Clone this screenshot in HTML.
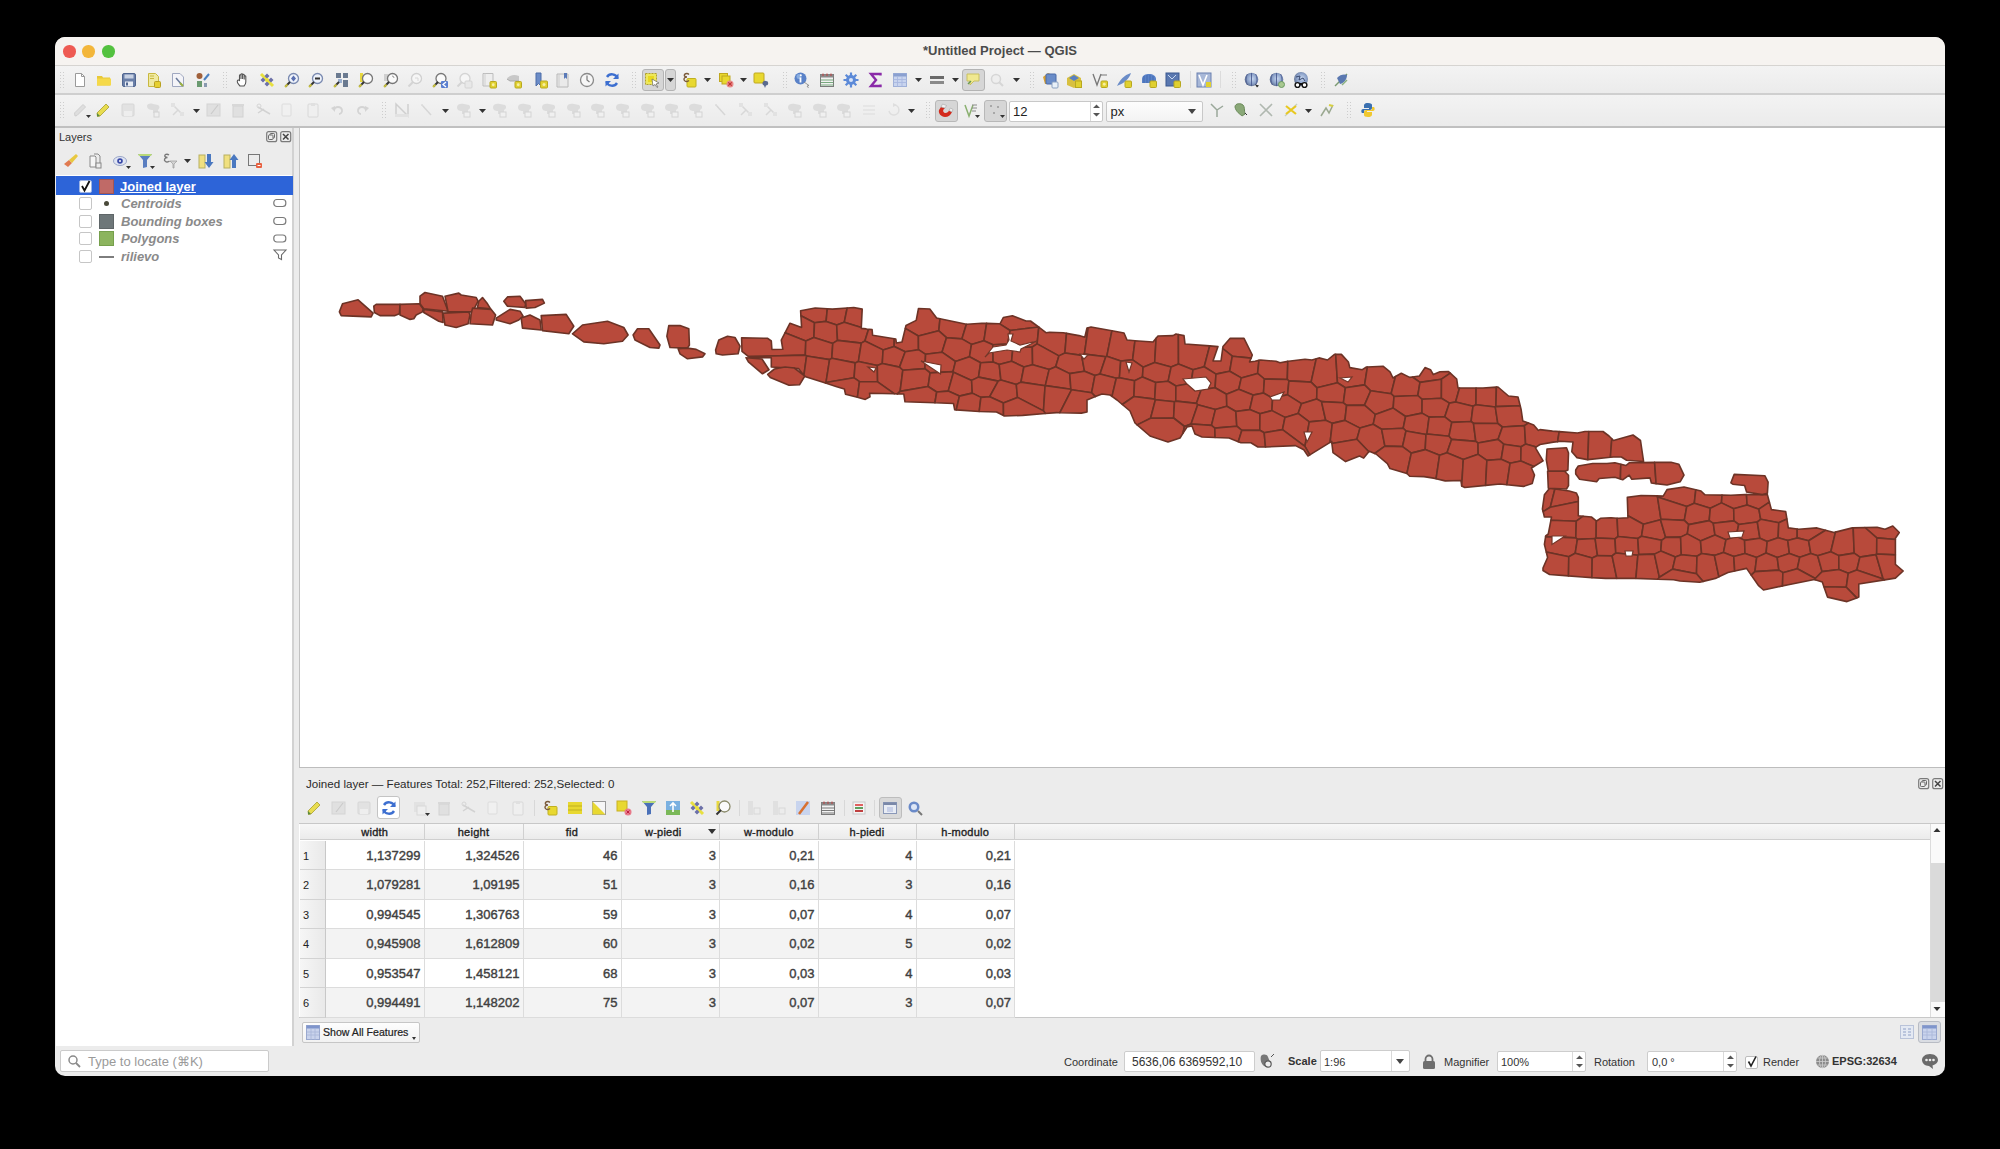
<!DOCTYPE html>
<html><head><meta charset="utf-8">
<style>
*{box-sizing:border-box;margin:0;padding:0}
html,body{width:2000px;height:1149px;background:#000;overflow:hidden;font-family:"Liberation Sans",sans-serif;color:#333}
.a{position:absolute}
.t{position:absolute;white-space:nowrap;font-size:11px;line-height:13px;color:#333}
#win{position:absolute;left:55px;top:37px;width:1890px;height:1039px;border-radius:10px;overflow:hidden;background:#ececec}
.tl{position:absolute;top:45px;width:12.5px;height:12.5px;border-radius:50%}
.sep{position:absolute;width:1890px;left:55px;height:1px}
.cell{position:absolute;height:29.5px;text-align:right;font-size:13px;line-height:29px;color:#404040;padding-right:3px;-webkit-text-stroke:0.4px #404040;border-right:1px solid #dcdcdc;border-bottom:1px solid #dcdcdc}
.hd{position:absolute;top:824px;height:16px;text-align:center;font-size:11px;line-height:16px;color:#222;-webkit-text-stroke:0.35px #222;letter-spacing:0.25px;border-right:1px solid #d0d0d0}
.rn{position:absolute;left:300px;width:26px;height:29.5px;font-size:11px;line-height:30px;padding-left:3px;color:#222;background:linear-gradient(90deg,#f6f6f6,#e9e9e9);border-bottom:1px solid #d2d2d2;border-right:1px solid #c8c8c8}
.box{position:absolute;background:#fff;border:1px solid #c9c9c9;border-radius:2px}
.press{position:absolute;background:#dcdcdc;border:1px solid #bdbdbd;border-radius:3px}
.arr{position:absolute;width:0;height:0;border-left:4px solid transparent;border-right:4px solid transparent;border-top:5px solid #333}
.hdl{position:absolute;width:6px;background-image:radial-gradient(#cdcdcd 0.7px,transparent 0.9px);background-size:3px 3px}
svg{position:absolute;overflow:visible}
</style></head>
<body>
<div id="all" style="position:absolute;left:0;top:0;width:2000px;height:1149px">
<div id="win"></div>
<!-- title bar -->
<div class="a" style="left:55px;top:37px;width:1890px;height:28px;background:#f6f3f0;border-radius:10px 10px 0 0"></div>
<div class="sep" style="top:65px;background:#d6d4d1"></div>
<div class="tl" style="left:63px;background:#ee5a52"></div>
<div class="tl" style="left:82px;background:#f3b63a"></div>
<div class="tl" style="left:102px;background:#53c13f"></div>
<div class="t" style="left:55px;width:1890px;top:43px;text-align:center;font-size:13px;line-height:15px;font-weight:bold;color:#4b4b4b">*Untitled Project — QGIS</div>
<!-- toolbars -->
<div class="a" style="left:55px;top:66px;width:1890px;height:28px;background:linear-gradient(#f3f3f3,#ebebeb)"></div>
<div class="sep" style="top:93px;height:2px;background:#cfcfcf"></div>
<div class="a" style="left:55px;top:95px;width:1890px;height:31px;background:linear-gradient(#f3f3f3,#ebebeb)"></div>
<div class="sep" style="top:126px;height:2px;background:#c0c0c0"></div>
<!-- layers dock -->
<div class="t" style="left:59px;top:131px;font-size:11px">Layers</div>
<div class="a" style="left:56px;top:175px;width:237px;height:871px;background:#fff"></div>
<div class="a" style="left:292px;top:128px;width:2px;height:918px;background:#d2d2d2"></div>
<div class="a" style="left:56px;top:176px;width:236.5px;height:18.5px;background:#2d64d8"></div>
<!-- map canvas -->
<div class="a" style="left:299px;top:128px;width:1646px;height:640px;background:#fff;border-left:1px solid #c2c2c2;border-bottom:1px solid #bdbdbd"></div>
<svg class="a" style="left:0;top:0" width="2000" height="1149" viewBox="0 0 2000 1149"><g fill="#b84a3b" stroke="#6c3326" stroke-width="1.6" stroke-linejoin="round"><path d="M1010.1 330.5 L1038.6 327.0 L1030.5 321.0 L1026.0 321.0 L1012.4 315.8 L1003.3 317.5 L1000.0 323.8 L999.7 323.8Z"/><path d="M1232.3 356.2 L1251.1 358.1 L1252.3 355.0 L1244.0 338.4 L1230.0 338.4 L1223.0 346.6 L1222.7 348.5Z"/><path d="M1420.0 382.4 L1441.5 379.2 L1450.3 373.2 L1448.5 371.5 L1440.0 371.8 L1433.3 374.6 L1430.5 369.7 L1425.0 367.6 L1419.4 376.0 L1412.5 377.0Z"/><path d="M814.5 322.7 L826.1 321.4 L827.3 308.8 L815.2 308.0 L800.6 310.7 L800.9 315.8Z"/><path d="M847.2 308.0 L832.4 309.1 L827.3 308.8 L826.1 321.4 L836.7 325.1 L844.3 322.2Z"/><path d="M844.3 322.2 L861.3 327.4 L862.2 309.1 L853.8 307.5 L847.2 308.0Z"/><path d="M940.0 318.7 L936.6 318.0 L929.8 309.0 L918.5 308.5 L916.2 320.4 L906.0 325.5 L905.3 328.4 L918.4 336.0 L938.8 330.8Z"/><path d="M961.9 338.9 L966.4 324.2 L940.0 318.7 L938.8 330.8 L946.5 337.7Z"/><path d="M986.6 323.4 L981.8 323.2 L967.0 324.3 L966.4 324.2 L961.9 338.9 L971.5 344.4 L983.9 340.8Z"/><path d="M1007.7 344.0 L1010.1 330.5 L999.7 323.8 L986.6 323.4 L983.9 340.8 L992.9 344.8Z"/><path d="M1010.1 330.5 L1007.7 344.0 L1012.9 347.9 L1032.3 347.0 L1037.1 343.9 L1038.8 327.2 L1038.6 327.0Z"/><path d="M1066.5 333.4 L1063.3 332.8 L1049.7 332.2 L1046.3 332.8 L1038.8 327.2 L1037.1 343.9 L1058.9 355.9 L1064.9 353.0Z"/><path d="M1064.9 353.0 L1081.6 355.4 L1084.4 354.1 L1088.2 327.7 L1087.0 328.0 L1084.8 337.3 L1079.0 335.6 L1066.5 333.4Z"/><path d="M1084.4 354.1 L1105.8 356.8 L1106.8 356.3 L1111.9 330.8 L1091.0 327.0 L1088.2 327.7Z"/><path d="M1106.8 356.3 L1120.7 361.1 L1132.6 359.8 L1135.0 340.7 L1127.0 340.0 L1124.0 333.0 L1111.9 330.8Z"/><path d="M1154.7 362.5 L1156.1 338.3 L1153.0 342.0 L1138.5 341.0 L1135.0 340.7 L1132.6 359.8 L1143.1 367.2Z"/><path d="M1154.7 362.5 L1171.1 367.1 L1178.5 364.1 L1178.4 334.5 L1176.0 334.0 L1173.0 335.6 L1158.0 336.0 L1156.1 338.3Z"/><path d="M1178.5 364.1 L1193.0 369.8 L1204.2 366.8 L1209.7 345.9 L1185.0 344.0 L1184.0 335.6 L1178.4 334.5Z"/><path d="M1222.7 348.5 L1221.0 361.0 L1213.0 361.0 L1218.0 346.6 L1209.7 345.9 L1204.2 366.8 L1216.0 374.1 L1229.7 371.3 L1232.3 356.2Z"/><path d="M1232.3 356.2 L1229.7 371.3 L1241.3 377.9 L1257.6 373.4 L1259.0 360.4 L1255.0 361.3 L1249.5 362.0 L1251.1 358.1Z"/><path d="M1264.4 379.0 L1287.3 379.5 L1287.8 361.4 L1280.0 362.7 L1276.0 361.3 L1260.6 360.0 L1259.0 360.4 L1257.6 373.4Z"/><path d="M1287.3 379.5 L1288.9 380.9 L1311.1 382.1 L1316.3 358.7 L1312.0 360.0 L1305.0 359.2 L1288.5 361.3 L1287.8 361.4Z"/><path d="M1311.1 382.1 L1317.0 387.8 L1337.5 382.8 L1335.7 354.4 L1334.5 354.4 L1327.5 360.0 L1319.0 357.9 L1316.3 358.7Z"/><path d="M1364.6 384.9 L1367.4 367.0 L1366.5 367.0 L1362.3 369.7 L1349.8 367.6 L1348.4 362.0 L1341.4 354.4 L1335.7 354.4 L1337.5 382.8 L1345.4 387.7Z"/><path d="M1391.1 393.7 L1395.5 376.5 L1393.0 378.0 L1390.0 371.8 L1383.0 366.2 L1367.4 367.0 L1364.6 384.9 L1370.7 390.8Z"/><path d="M1420.0 382.4 L1412.5 377.0 L1409.7 377.4 L1401.3 373.2 L1395.5 376.5 L1391.1 393.7 L1394.0 396.5 L1417.8 395.5Z"/><path d="M1441.4 398.3 L1441.5 379.2 L1420.0 382.4 L1417.8 395.5 L1422.1 399.3Z"/><path d="M1459.5 388.0 L1458.0 388.0 L1456.7 379.0 L1450.3 373.2 L1441.5 379.2 L1441.4 398.3 L1449.4 403.1 L1455.6 402.0Z"/><path d="M1455.6 402.0 L1473.0 406.3 L1476.0 404.8 L1476.1 388.0 L1459.5 388.0Z"/><path d="M1476.0 404.8 L1495.3 407.0 L1495.9 406.6 L1496.4 387.1 L1483.0 388.0 L1476.1 388.0Z"/><path d="M1495.9 406.6 L1520.2 405.8 L1518.0 397.0 L1508.5 396.0 L1498.0 387.0 L1496.4 387.1Z"/><path d="M814.5 322.7 L800.9 315.8 L801.6 327.4 L790.0 323.2 L785.0 332.8 L805.8 340.9 L813.9 337.6Z"/><path d="M826.1 321.4 L814.5 322.7 L813.9 337.6 L832.8 343.4 L837.5 340.4 L836.7 325.1Z"/><path d="M868.5 329.6 L866.1 328.9 L861.2 328.4 L861.3 327.4 L844.3 322.2 L836.7 325.1 L837.5 340.4 L861.3 343.1 L864.9 341.0Z"/><path d="M868.5 329.6 L864.9 341.0 L883.1 349.9 L894.2 346.5 L894.2 338.7 L872.6 335.2 L872.1 329.5 L869.2 329.2Z"/><path d="M918.4 336.0 L905.3 328.4 L902.0 342.0 L896.4 343.0 L895.8 339.0 L894.2 338.7 L894.2 346.5 L905.2 351.8 L918.5 349.7Z"/><path d="M942.0 352.2 L946.5 337.7 L938.8 330.8 L918.4 336.0 L918.5 349.7 L925.6 354.3Z"/><path d="M961.9 338.9 L946.5 337.7 L942.0 352.2 L955.5 361.5 L969.5 356.7 L971.5 344.4Z"/><path d="M983.9 340.8 L971.5 344.4 L969.5 356.7 L980.7 362.7 L993.1 362.0 L992.9 344.8Z"/><path d="M993.1 362.0 L999.2 364.5 L1011.6 361.2 L1012.9 347.9 L1007.7 344.0 L992.9 344.8Z"/><path d="M1023.9 367.0 L1032.6 364.8 L1032.3 347.0 L1012.9 347.9 L1011.6 361.2Z"/><path d="M1037.1 343.9 L1032.3 347.0 L1032.6 364.8 L1049.2 369.4 L1055.7 366.8 L1058.9 355.9Z"/><path d="M1081.6 355.4 L1064.9 353.0 L1058.9 355.9 L1055.7 366.8 L1069.7 373.6 L1084.5 371.2Z"/><path d="M1105.8 356.8 L1084.4 354.1 L1081.6 355.4 L1084.5 371.2 L1094.9 375.6 L1100.0 374.0Z"/><path d="M1116.3 378.3 L1119.4 377.7 L1120.7 361.1 L1106.8 356.3 L1105.8 356.8 L1100.0 374.0Z"/><path d="M1134.6 380.8 L1142.5 376.9 L1143.1 367.2 L1132.6 359.8 L1120.7 361.1 L1119.4 377.7Z"/><path d="M1155.7 382.5 L1168.1 381.3 L1171.1 367.1 L1154.7 362.5 L1143.1 367.2 L1142.5 376.9Z"/><path d="M1168.1 381.3 L1175.9 386.0 L1191.2 383.2 L1193.0 369.8 L1178.5 364.1 L1171.1 367.1Z"/><path d="M1191.2 383.2 L1201.2 389.7 L1215.1 387.7 L1216.0 374.1 L1204.2 366.8 L1193.0 369.8Z"/><path d="M1216.0 374.1 L1215.1 387.7 L1226.5 394.3 L1238.8 389.2 L1241.3 377.9 L1229.7 371.3Z"/><path d="M1241.3 377.9 L1238.8 389.2 L1253.0 395.1 L1263.5 393.0 L1264.4 379.0 L1257.6 373.4Z"/><path d="M1287.6 394.8 L1288.9 380.9 L1287.3 379.5 L1264.4 379.0 L1263.5 393.0 L1272.6 398.2Z"/><path d="M1317.0 387.8 L1311.1 382.1 L1288.9 380.9 L1287.6 394.8 L1301.5 403.7 L1316.7 399.0Z"/><path d="M1343.4 402.8 L1345.4 387.7 L1337.5 382.8 L1317.0 387.8 L1316.7 399.0 L1321.5 401.6Z"/><path d="M1343.4 402.8 L1346.6 405.4 L1364.5 405.1 L1370.7 390.8 L1364.6 384.9 L1345.4 387.7Z"/><path d="M1393.2 408.1 L1394.0 396.5 L1391.1 393.7 L1370.7 390.8 L1364.5 405.1 L1375.3 414.5Z"/><path d="M1417.8 395.5 L1394.0 396.5 L1393.2 408.1 L1405.6 416.5 L1422.0 413.1 L1422.1 399.3Z"/><path d="M1449.4 403.1 L1441.4 398.3 L1422.1 399.3 L1422.0 413.1 L1429.1 417.1 L1444.8 416.8Z"/><path d="M1471.1 421.5 L1473.0 406.3 L1455.6 402.0 L1449.4 403.1 L1444.8 416.8 L1451.8 422.4Z"/><path d="M1473.5 423.4 L1497.8 423.5 L1495.3 407.0 L1476.0 404.8 L1473.0 406.3 L1471.1 421.5Z"/><path d="M1497.8 423.5 L1502.4 427.0 L1524.5 425.6 L1528.4 423.0 L1522.8 421.0 L1521.2 410.0 L1520.2 405.8 L1495.9 406.6 L1495.3 407.0Z"/><path d="M805.3 355.1 L805.8 340.9 L785.0 332.8 L781.3 340.0 L782.8 349.3 L771.9 349.5 L771.3 341.0 L767.7 338.3 L741.6 337.8 L742.0 351.4 L748.6 356.6Z"/><path d="M829.6 359.6 L831.8 358.3 L832.8 343.4 L813.9 337.6 L805.8 340.9 L805.3 355.1 L806.6 356.0Z"/><path d="M837.5 340.4 L832.8 343.4 L831.8 358.3 L855.2 362.9 L858.4 361.5 L861.3 343.1Z"/><path d="M861.3 343.1 L858.4 361.5 L877.3 365.5 L882.3 363.5 L883.1 349.9 L864.9 341.0Z"/><path d="M905.2 351.8 L894.2 346.5 L883.1 349.9 L882.3 363.5 L899.5 367.1Z"/><path d="M918.5 349.7 L905.2 351.8 L899.5 367.1 L902.8 370.3 L924.9 368.6 L925.6 354.3Z"/><path d="M924.9 368.6 L930.1 372.9 L953.0 371.6 L955.5 361.5 L942.0 352.2 L925.6 354.3Z"/><path d="M955.5 361.5 L953.0 371.6 L953.5 372.2 L971.6 380.4 L978.5 377.1 L980.7 362.7 L969.5 356.7Z"/><path d="M980.7 362.7 L978.5 377.1 L998.2 381.1 L1000.9 380.1 L999.2 364.5 L993.1 362.0Z"/><path d="M1023.9 367.0 L1011.6 361.2 L999.2 364.5 L1000.9 380.1 L1016.3 384.5 L1020.9 382.1Z"/><path d="M1045.1 385.8 L1045.3 385.6 L1049.2 369.4 L1032.6 364.8 L1023.9 367.0 L1020.9 382.1Z"/><path d="M1055.7 366.8 L1049.2 369.4 L1045.3 385.6 L1070.9 389.2 L1069.7 373.6Z"/><path d="M1084.5 371.2 L1069.7 373.6 L1070.9 389.2 L1071.5 389.8 L1091.6 392.8 L1094.9 375.6Z"/><path d="M1116.3 378.3 L1100.0 374.0 L1094.9 375.6 L1091.6 392.8 L1095.4 396.6 L1102.0 394.0 L1110.0 395.0 L1112.0 396.4Z"/><path d="M1133.9 396.5 L1134.6 380.8 L1119.4 377.7 L1116.3 378.3 L1112.0 396.4 L1117.0 400.0 L1122.3 404.5Z"/><path d="M1133.9 396.5 L1154.7 399.1 L1155.7 382.5 L1142.5 376.9 L1134.6 380.8Z"/><path d="M1155.4 399.7 L1174.5 401.8 L1175.8 401.1 L1175.9 386.0 L1168.1 381.3 L1155.7 382.5 L1154.7 399.1Z"/><path d="M1175.8 401.1 L1196.4 403.4 L1201.2 389.7 L1191.2 383.2 L1175.9 386.0Z"/><path d="M1215.4 409.6 L1226.8 406.2 L1226.5 394.3 L1215.1 387.7 L1201.2 389.7 L1196.4 403.4 L1197.7 404.7Z"/><path d="M1226.8 406.2 L1235.9 411.5 L1249.7 409.6 L1253.0 395.1 L1238.8 389.2 L1226.5 394.3Z"/><path d="M1263.5 393.0 L1253.0 395.1 L1249.7 409.6 L1260.0 413.7 L1271.9 410.6 L1272.6 398.2Z"/><path d="M1271.9 410.6 L1285.0 417.4 L1298.1 413.4 L1301.5 403.7 L1287.6 394.8 L1272.6 398.2Z"/><path d="M1316.7 399.0 L1301.5 403.7 L1298.1 413.4 L1309.3 421.9 L1325.7 420.3 L1321.5 401.6Z"/><path d="M1325.7 420.3 L1332.3 423.4 L1344.9 420.4 L1346.6 405.4 L1343.4 402.8 L1321.5 401.6Z"/><path d="M1360.0 428.1 L1373.2 424.3 L1375.3 414.5 L1364.5 405.1 L1346.6 405.4 L1344.9 420.4Z"/><path d="M1381.6 429.2 L1403.2 428.2 L1405.6 416.5 L1393.2 408.1 L1375.3 414.5 L1373.2 424.3Z"/><path d="M1405.6 416.5 L1403.2 428.2 L1406.0 431.0 L1426.0 434.5 L1426.9 434.0 L1429.1 417.1 L1422.0 413.1Z"/><path d="M1444.8 416.8 L1429.1 417.1 L1426.9 434.0 L1449.0 436.2 L1451.8 422.4Z"/><path d="M1473.5 423.4 L1471.1 421.5 L1451.8 422.4 L1449.0 436.2 L1451.6 439.4 L1475.8 441.4Z"/><path d="M1498.0 439.4 L1502.4 427.0 L1497.8 423.5 L1473.5 423.4 L1475.8 441.4 L1478.0 443.0Z"/><path d="M1521.1 446.8 L1525.6 444.1 L1524.5 425.6 L1502.4 427.0 L1498.0 439.4 L1503.7 444.2Z"/><path d="M1524.5 425.6 L1525.6 444.1 L1536.3 446.9 L1540.0 444.5 L1553.3 442.1 L1557.6 441.6 L1559.2 431.6 L1552.5 431.1 L1540.0 429.6 L1538.4 430.4 L1533.7 424.9 L1528.4 423.0Z"/><path d="M1557.6 441.6 L1560.0 441.3 L1573.0 442.0 L1571.8 451.7 L1577.0 457.6 L1587.4 459.6 L1587.8 459.6 L1588.8 431.5 L1585.0 431.5 L1577.5 433.0 L1559.2 431.6Z"/><path d="M1587.8 459.6 L1610.4 457.3 L1611.8 438.8 L1609.0 436.0 L1603.0 431.5 L1588.8 431.5Z"/><path d="M1610.4 457.3 L1613.5 457.0 L1621.4 457.0 L1626.6 460.2 L1643.6 461.5 L1640.5 440.5 L1633.0 435.0 L1613.5 440.5 L1611.8 438.8Z"/><path d="M806.6 356.0 L805.3 355.1 L748.6 356.6 L750.0 357.7 L771.3 357.7 L771.3 367.0 L798.5 368.6 L803.9 375.4Z"/><path d="M803.9 375.4 L804.8 376.5 L825.5 383.1 L826.0 382.5 L829.6 359.6 L806.6 356.0Z"/><path d="M831.8 358.3 L829.6 359.6 L826.0 382.5 L854.1 377.8 L855.2 362.9Z"/><path d="M855.2 362.9 L854.1 377.8 L859.5 381.7 L877.6 381.8 L877.3 365.5 L858.4 361.5Z"/><path d="M900.1 391.4 L902.8 370.3 L899.5 367.1 L882.3 363.5 L877.3 365.5 L877.6 381.8 L894.5 393.8 L897.4 393.9Z"/><path d="M900.1 391.4 L928.1 386.5 L930.1 372.9 L924.9 368.6 L902.8 370.3Z"/><path d="M928.1 386.5 L936.7 392.0 L948.2 391.1 L953.5 372.2 L953.0 371.6 L930.1 372.9Z"/><path d="M948.2 391.1 L959.4 396.1 L972.3 393.1 L971.6 380.4 L953.5 372.2Z"/><path d="M971.6 380.4 L972.3 393.1 L980.9 397.4 L989.7 396.7 L998.2 381.1 L978.5 377.1Z"/><path d="M1000.9 380.1 L998.2 381.1 L989.7 396.7 L1003.4 403.0 L1017.5 397.4 L1016.3 384.5Z"/><path d="M1016.3 384.5 L1017.5 397.4 L1043.5 410.9 L1045.1 385.8 L1020.9 382.1Z"/><path d="M1071.5 389.8 L1070.9 389.2 L1045.3 385.6 L1045.1 385.8 L1043.5 410.9 L1045.3 413.5 L1056.5 412.6 L1059.9 412.7Z"/><path d="M1071.5 389.8 L1059.9 412.7 L1081.4 413.1 L1087.0 412.0 L1087.0 400.0 L1095.4 396.6 L1091.6 392.8Z"/><path d="M1122.3 404.5 L1130.0 411.0 L1135.0 423.0 L1137.2 424.9 L1150.6 418.2 L1155.4 399.7 L1154.7 399.1 L1133.9 396.5Z"/><path d="M1150.6 418.2 L1173.6 418.0 L1174.5 401.8 L1155.4 399.7Z"/><path d="M1173.6 418.0 L1184.5 426.5 L1191.1 424.0 L1197.7 404.7 L1196.4 403.4 L1175.8 401.1 L1174.5 401.8Z"/><path d="M1211.5 425.4 L1215.4 409.6 L1197.7 404.7 L1191.1 424.0Z"/><path d="M1211.5 425.4 L1214.8 428.1 L1236.8 426.2 L1235.9 411.5 L1226.8 406.2 L1215.4 409.6Z"/><path d="M1249.7 409.6 L1235.9 411.5 L1236.8 426.2 L1241.8 430.4 L1259.8 430.2 L1260.0 413.7Z"/><path d="M1260.0 413.7 L1259.8 430.2 L1264.2 432.7 L1282.5 429.6 L1285.0 417.4 L1271.9 410.6Z"/><path d="M1309.3 421.9 L1298.1 413.4 L1285.0 417.4 L1282.5 429.6 L1304.9 446.3Z"/><path d="M1332.3 423.4 L1325.7 420.3 L1309.3 421.9 L1304.9 446.3 L1309.8 454.9 L1330.1 442.4Z"/><path d="M1330.1 442.4 L1331.7 441.4 L1331.9 443.5 L1356.9 439.3 L1360.0 428.1 L1344.9 420.4 L1332.3 423.4Z"/><path d="M1384.9 446.1 L1381.6 429.2 L1373.2 424.3 L1360.0 428.1 L1356.9 439.3 L1368.8 451.8 L1369.3 451.2 L1374.7 453.5Z"/><path d="M1402.5 446.6 L1406.0 431.0 L1403.2 428.2 L1381.6 429.2 L1384.9 446.1Z"/><path d="M1406.0 431.0 L1402.5 446.6 L1411.3 453.1 L1425.2 449.6 L1426.0 434.5Z"/><path d="M1449.0 436.2 L1426.9 434.0 L1426.0 434.5 L1425.2 449.6 L1439.6 455.2 L1447.0 452.7 L1451.6 439.4Z"/><path d="M1475.8 441.4 L1451.6 439.4 L1447.0 452.7 L1463.3 459.5 L1478.2 454.3 L1478.0 443.0Z"/><path d="M1478.2 454.3 L1486.9 460.4 L1501.2 459.2 L1503.7 444.2 L1498.0 439.4 L1478.0 443.0Z"/><path d="M1510.1 463.2 L1520.8 461.0 L1521.1 446.8 L1503.7 444.2 L1501.2 459.2Z"/><path d="M1525.6 444.1 L1521.1 446.8 L1520.8 461.0 L1533.8 466.5 L1543.1 460.9 L1535.3 447.6 L1536.3 446.9Z"/><path d="M826.0 382.5 L825.5 383.1 L836.0 386.4 L844.4 389.0 L845.5 394.2 L857.4 397.3 L859.5 381.7 L854.1 377.8Z"/><path d="M857.4 397.3 L865.3 399.4 L870.0 396.8 L869.5 393.2 L894.5 393.8 L877.6 381.8 L859.5 381.7Z"/><path d="M936.7 392.0 L928.1 386.5 L900.1 391.4 L897.4 393.9 L903.8 394.0 L905.0 401.8 L934.9 402.8Z"/><path d="M959.4 396.1 L948.2 391.1 L936.7 392.0 L934.9 402.8 L953.5 403.5 L954.7 409.8 L956.3 409.9Z"/><path d="M980.9 397.4 L972.3 393.1 L959.4 396.1 L956.3 409.9 L979.2 411.5Z"/><path d="M980.9 397.4 L979.2 411.5 L979.6 411.5 L996.5 412.0 L1003.5 415.5 L1003.4 403.0 L989.7 396.7Z"/><path d="M1043.5 410.9 L1017.5 397.4 L1003.4 403.0 L1003.5 415.5 L1004.5 416.0 L1022.6 415.4 L1045.3 413.5Z"/><path d="M1184.5 426.5 L1173.6 418.0 L1150.6 418.2 L1137.2 424.9 L1150.0 436.0 L1168.0 442.0 L1180.0 438.0 L1182.9 433.4Z"/><path d="M1214.8 428.1 L1211.5 425.4 L1191.1 424.0 L1184.5 426.5 L1182.9 433.4 L1187.0 427.0 L1192.0 426.0 L1195.0 434.0 L1202.0 437.0 L1215.1 437.5Z"/><path d="M1214.8 428.1 L1215.1 437.5 L1229.0 438.0 L1238.3 441.7 L1241.8 430.4 L1236.8 426.2Z"/><path d="M1238.3 441.7 L1241.0 442.8 L1250.9 442.8 L1257.9 447.0 L1265.5 447.0 L1264.2 432.7 L1259.8 430.2 L1241.8 430.4Z"/><path d="M1282.5 429.6 L1264.2 432.7 L1265.5 447.0 L1266.2 447.0 L1295.5 445.6 L1303.8 449.8 L1308.0 456.0 L1309.8 454.9 L1304.9 446.3Z"/><path d="M1356.9 439.3 L1331.9 443.5 L1333.0 452.6 L1345.6 461.6 L1359.5 456.0 L1363.7 458.1 L1368.8 451.8Z"/><path d="M1411.3 453.1 L1402.5 446.6 L1384.9 446.1 L1374.7 453.5 L1376.0 454.0 L1387.4 463.7 L1390.0 468.6 L1406.9 473.5Z"/><path d="M1439.6 455.2 L1425.2 449.6 L1411.3 453.1 L1406.9 473.5 L1407.0 473.5 L1409.7 476.2 L1424.0 476.6 L1433.5 478.1 L1436.1 478.7Z"/><path d="M1463.3 459.5 L1447.0 452.7 L1439.6 455.2 L1436.1 478.7 L1445.2 480.9 L1460.9 480.5 L1461.7 486.0 L1461.7 486.0Z"/><path d="M1486.9 460.4 L1478.2 454.3 L1463.3 459.5 L1461.7 486.0 L1464.8 487.5 L1485.6 485.4Z"/><path d="M1510.1 463.2 L1501.2 459.2 L1486.9 460.4 L1485.6 485.4 L1500.0 484.0 L1506.9 484.7Z"/><path d="M1520.8 461.0 L1510.1 463.2 L1506.9 484.7 L1523.5 486.4 L1532.2 483.6 L1534.5 475.0 L1531.4 468.0 L1533.8 466.5Z"/><path d="M1550.3 507.3 L1554.9 489.0 L1549.6 488.3 L1544.4 494.8 L1542.4 509.0 L1543.1 511.6Z"/><path d="M1550.3 507.3 L1578.3 501.5 L1578.3 497.4 L1576.3 492.9 L1569.2 491.0 L1554.9 489.0Z"/><path d="M1657.5 497.0 L1686.8 506.4 L1694.3 503.2 L1695.8 489.8 L1684.0 487.0 L1667.0 489.6 L1663.2 496.1 L1656.6 495.9Z"/><path d="M1694.3 503.2 L1710.3 508.3 L1721.5 502.9 L1722.0 495.1 L1705.0 494.8 L1701.0 491.0 L1695.8 489.8Z"/><path d="M1721.5 502.9 L1733.7 508.8 L1747.1 504.9 L1746.5 494.6 L1745.2 494.6 L1730.9 495.2 L1722.0 495.1Z"/><path d="M1747.1 504.9 L1758.9 509.2 L1769.4 502.2 L1767.4 494.6 L1746.5 494.6Z"/><path d="M1550.3 507.3 L1543.1 511.6 L1544.4 517.0 L1551.5 517.0 L1550.9 520.3 L1576.3 521.2 L1583.2 516.2 L1578.3 515.7 L1578.3 501.5Z"/><path d="M1643.4 524.3 L1660.5 519.8 L1661.0 519.3 L1657.5 497.0 L1656.6 495.9 L1641.0 495.5 L1627.3 497.4 L1627.9 515.8Z"/><path d="M1661.0 519.3 L1684.3 520.4 L1686.8 506.4 L1657.5 497.0Z"/><path d="M1688.7 524.6 L1709.2 520.6 L1710.3 508.3 L1694.3 503.2 L1686.8 506.4 L1684.3 520.4Z"/><path d="M1713.3 523.3 L1734.0 520.9 L1733.7 508.8 L1721.5 502.9 L1710.3 508.3 L1709.2 520.6Z"/><path d="M1760.7 519.3 L1758.9 509.2 L1747.1 504.9 L1733.7 508.8 L1734.0 520.9 L1738.7 524.5 L1757.3 522.0Z"/><path d="M1758.9 509.2 L1760.7 519.3 L1778.8 522.7 L1786.9 519.0 L1785.7 511.6 L1771.4 509.6 L1769.4 502.2Z"/><path d="M1575.8 537.9 L1576.3 521.2 L1550.9 520.3 L1548.3 534.0 L1545.7 536.0 L1545.6 536.6Z"/><path d="M1576.3 521.2 L1575.8 537.9 L1577.4 539.4 L1595.1 538.5 L1596.1 538.0 L1596.3 520.8 L1591.4 517.0 L1583.2 516.2Z"/><path d="M1596.1 538.0 L1615.0 538.8 L1618.0 536.5 L1617.1 518.2 L1611.0 517.7 L1600.5 518.3 L1596.6 521.0 L1596.3 520.8Z"/><path d="M1618.0 536.5 L1637.8 538.5 L1641.5 536.3 L1643.4 524.3 L1627.9 515.8 L1628.0 517.7 L1618.8 518.3 L1617.1 518.2Z"/><path d="M1661.6 540.3 L1665.7 537.4 L1660.5 519.8 L1643.4 524.3 L1641.5 536.3Z"/><path d="M1660.5 519.8 L1665.7 537.4 L1680.6 537.1 L1687.3 533.9 L1688.7 524.6 L1684.3 520.4 L1661.0 519.3Z"/><path d="M1700.5 540.9 L1715.0 535.1 L1713.3 523.3 L1709.2 520.6 L1688.7 524.6 L1687.3 533.9Z"/><path d="M1734.0 520.9 L1713.3 523.3 L1715.0 535.1 L1726.0 539.7 L1736.2 536.3 L1738.7 524.5Z"/><path d="M1759.9 538.2 L1757.3 522.0 L1738.7 524.5 L1736.2 536.3 L1744.6 540.4Z"/><path d="M1778.8 522.7 L1760.7 519.3 L1757.3 522.0 L1759.9 538.2 L1767.2 541.6 L1778.1 537.7Z"/><path d="M1797.2 537.9 L1797.2 529.0 L1788.3 527.9 L1786.9 519.0 L1778.8 522.7 L1778.1 537.7 L1787.8 540.6Z"/><path d="M1797.2 537.9 L1808.6 540.7 L1825.5 530.2 L1817.0 527.9 L1798.8 529.2 L1797.2 529.0Z"/><path d="M1876.8 537.9 L1895.4 539.5 L1895.4 538.3 L1899.3 532.5 L1892.8 526.0 L1885.0 529.2 L1877.1 527.2 L1864.9 527.5Z"/><path d="M1568.8 556.8 L1575.2 553.3 L1577.4 539.4 L1575.8 537.9 L1545.6 536.6 L1544.4 544.4 L1546.3 552.0Z"/><path d="M1575.2 553.3 L1592.2 557.9 L1597.5 555.6 L1595.1 538.5 L1577.4 539.4Z"/><path d="M1595.1 538.5 L1597.5 555.6 L1612.1 555.9 L1615.8 553.0 L1615.0 538.8 L1596.1 538.0Z"/><path d="M1618.0 536.5 L1615.0 538.8 L1615.8 553.0 L1637.9 555.3 L1638.8 554.6 L1637.8 538.5Z"/><path d="M1638.8 554.6 L1654.4 554.1 L1660.8 551.1 L1661.6 540.3 L1641.5 536.3 L1637.8 538.5Z"/><path d="M1675.4 556.9 L1681.3 554.8 L1680.6 537.1 L1665.7 537.4 L1661.6 540.3 L1660.8 551.1Z"/><path d="M1681.3 554.8 L1697.0 556.2 L1701.6 553.5 L1700.5 540.9 L1687.3 533.9 L1680.6 537.1Z"/><path d="M1714.4 555.4 L1723.5 552.4 L1726.0 539.7 L1715.0 535.1 L1700.5 540.9 L1701.6 553.5Z"/><path d="M1744.6 540.4 L1736.2 536.3 L1726.0 539.7 L1723.5 552.4 L1733.8 556.6 L1745.0 553.4Z"/><path d="M1759.9 538.2 L1744.6 540.4 L1745.0 553.4 L1756.7 557.4 L1766.1 553.0 L1767.2 541.6Z"/><path d="M1778.1 537.7 L1767.2 541.6 L1766.1 553.0 L1777.2 557.5 L1789.4 553.6 L1787.8 540.6Z"/><path d="M1789.4 553.6 L1799.8 557.2 L1810.8 553.4 L1808.6 540.7 L1797.2 537.9 L1787.8 540.6Z"/><path d="M1808.6 540.7 L1810.8 553.4 L1817.7 555.8 L1830.8 551.7 L1835.5 532.1 L1834.0 532.5 L1825.5 530.2Z"/><path d="M1830.8 551.7 L1838.8 555.6 L1854.2 553.1 L1853.2 527.9 L1852.3 527.9 L1835.5 532.1Z"/><path d="M1854.2 553.1 L1859.9 557.1 L1876.0 554.6 L1876.7 554.0 L1876.8 537.9 L1864.9 527.5 L1853.2 527.9Z"/><path d="M1876.8 537.9 L1876.7 554.0 L1895.4 554.9 L1895.4 539.5Z"/><path d="M1568.8 556.8 L1546.3 552.0 L1547.6 557.5 L1543.0 568.0 L1543.0 570.5 L1549.6 574.5 L1568.5 575.9Z"/><path d="M1592.2 557.9 L1575.2 553.3 L1568.8 556.8 L1568.5 575.9 L1582.2 577.0 L1591.9 577.6Z"/><path d="M1612.1 555.9 L1597.5 555.6 L1592.2 557.9 L1591.9 577.6 L1605.7 578.4 L1616.8 578.4Z"/><path d="M1637.9 555.3 L1615.8 553.0 L1612.1 555.9 L1616.8 578.4 L1634.4 578.4 L1635.9 578.4Z"/><path d="M1659.4 577.3 L1654.4 554.1 L1638.8 554.6 L1637.9 555.3 L1635.9 578.4 L1657.8 579.2Z"/><path d="M1654.4 554.1 L1659.4 577.3 L1672.6 569.1 L1675.4 556.9 L1660.8 551.1Z"/><path d="M1675.4 556.9 L1672.6 569.1 L1696.5 573.7 L1697.0 556.2 L1681.3 554.8Z"/><path d="M1696.5 573.7 L1703.1 581.4 L1715.4 578.4 L1718.9 576.8 L1714.4 555.4 L1701.6 553.5 L1697.0 556.2Z"/><path d="M1723.5 552.4 L1714.4 555.4 L1718.9 576.8 L1728.0 572.5 L1734.7 571.0 L1733.8 556.6Z"/><path d="M1754.9 571.6 L1756.7 557.4 L1745.0 553.4 L1733.8 556.6 L1734.7 571.0 L1746.6 568.4 L1751.2 575.1Z"/><path d="M1766.1 553.0 L1756.7 557.4 L1754.9 571.6 L1778.9 570.1 L1777.2 557.5Z"/><path d="M1778.9 570.1 L1782.9 572.7 L1797.3 568.7 L1799.8 557.2 L1789.4 553.6 L1777.2 557.5Z"/><path d="M1797.3 568.7 L1815.3 578.5 L1822.1 571.6 L1817.7 555.8 L1810.8 553.4 L1799.8 557.2Z"/><path d="M1817.7 555.8 L1822.1 571.6 L1838.9 569.5 L1838.8 555.6 L1830.8 551.7Z"/><path d="M1838.9 569.5 L1848.3 573.2 L1856.8 570.1 L1859.9 557.1 L1854.2 553.1 L1838.8 555.6Z"/><path d="M1876.0 554.6 L1859.9 557.1 L1856.8 570.1 L1883.2 578.9Z"/><path d="M1876.7 554.0 L1876.0 554.6 L1883.2 578.9 L1884.5 579.9 L1895.4 578.1 L1903.2 571.0 L1895.4 564.4 L1895.4 554.9Z"/><path d="M1696.5 573.7 L1672.6 569.1 L1659.4 577.3 L1657.8 579.2 L1673.6 579.7 L1680.0 581.0 L1699.7 582.3 L1703.1 581.4Z"/><path d="M1782.9 572.7 L1778.9 570.1 L1754.9 571.6 L1751.2 575.1 L1758.3 585.3 L1763.5 590.0 L1782.5 585.9Z"/><path d="M1815.3 578.5 L1797.3 568.7 L1782.9 572.7 L1782.5 585.9 L1788.3 584.7 L1814.4 579.5 L1815.2 579.8Z"/><path d="M1846.3 587.2 L1848.3 573.2 L1838.9 569.5 L1822.1 571.6 L1815.3 578.5 L1815.2 579.8 L1822.3 582.1 L1823.9 586.7Z"/><path d="M1883.2 578.9 L1856.8 570.1 L1848.3 573.2 L1846.3 587.2 L1856.7 597.9 L1858.8 597.1 L1858.8 584.0 L1884.5 579.9Z"/><path d="M1846.3 587.2 L1823.9 586.7 L1827.5 597.1 L1847.0 601.6 L1856.7 597.9Z"/><path d="M1620.8 464.2 L1614.9 462.8 L1607.0 463.5 L1592.7 463.5 L1578.3 466.0 L1575.7 470.0 L1575.7 474.0 L1579.6 479.2 L1596.6 481.8 L1599.2 478.5 L1614.9 477.2 L1620.4 479.0Z"/><path d="M1620.4 479.0 L1622.7 479.8 L1629.2 475.2 L1631.8 479.2 L1650.0 477.9 L1651.4 483.0 L1656.1 483.6 L1654.6 462.4 L1629.2 462.8 L1626.0 465.5 L1620.8 464.2Z"/><path d="M1656.1 483.6 L1667.0 485.0 L1680.1 481.8 L1684.0 475.2 L1678.8 464.2 L1671.0 462.2 L1654.6 462.4Z"/><path d="M339.4 311.9 L342.5 303.8 L358.1 299.8 L373.1 313.1 L371.2 316.9 L341.2 315.6Z"/><path d="M373.8 306.2 L376.2 304.4 L400.0 304.4 L399.4 313.8 L395.0 315.6 L380.0 315.6 L374.4 312.5Z"/><path d="M400.0 304.4 L419.4 303.8 L423.1 308.8 L422.5 311.9 L416.2 315.0 L413.8 318.8 L410.0 319.4 L400.0 315.0Z"/><path d="M420.0 296.2 L425.0 292.5 L442.5 296.2 L448.1 311.2 L423.8 308.8 L420.0 303.8Z"/><path d="M445.0 296.2 L458.8 293.1 L461.2 295.0 L476.2 297.5 L478.1 301.2 L472.5 311.9 L448.1 311.9Z"/><path d="M478.8 301.2 L482.5 297.5 L487.5 303.8 L490.6 308.8 L477.5 307.5Z"/><path d="M423.8 309.4 L442.5 311.9 L443.1 322.5 L438.8 321.2 L423.8 312.5Z"/><path d="M443.1 313.1 L468.8 311.9 L470.0 315.0 L468.1 323.8 L456.2 327.5 L445.0 325.0Z"/><path d="M472.5 308.1 L491.2 309.4 L495.6 315.0 L492.5 325.0 L470.0 323.8 L471.2 313.8Z"/><path d="M503.8 301.2 L507.5 296.9 L520.0 296.2 L525.6 303.8 L525.0 307.5 L507.5 306.2Z"/><path d="M525.6 300.6 L542.5 299.4 L544.4 303.1 L535.0 307.5 L526.2 308.1Z"/><path d="M496.2 318.1 L510.0 309.4 L520.0 311.2 L523.1 316.2 L518.8 320.0 L510.0 323.8 L496.2 320.0Z"/><path d="M521.2 318.1 L530.0 315.0 L540.0 320.0 L541.2 330.0 L522.5 328.1Z"/><path d="M541.2 315.6 L566.2 314.4 L573.8 326.2 L568.8 333.8 L542.5 330.6Z"/><path d="M572.5 333.8 L582.5 325.0 L607.5 321.2 L623.8 327.5 L628.1 335.0 L622.5 341.2 L603.8 343.8 L583.8 341.9Z"/><path d="M633.1 335.0 L637.5 328.8 L648.8 328.8 L660.0 345.0 L658.8 348.1 L650.0 347.5 L635.0 340.0Z"/><path d="M666.9 336.2 L668.8 325.6 L680.0 325.6 L688.8 328.8 L689.4 345.0 L687.5 348.1 L670.0 347.5Z"/><path d="M678.1 348.8 L687.5 348.1 L696.2 349.4 L705.0 353.8 L702.5 356.9 L687.5 358.8 L680.0 353.8Z"/><path d="M715.6 350.0 L718.8 340.0 L727.5 336.2 L735.0 337.5 L740.0 346.2 L738.1 353.8 L722.5 355.0 L716.2 353.8Z"/><path d="M746.0 357.7 L762.0 359.0 L769.0 369.7 L762.5 373.8 L748.4 361.8Z"/><path d="M767.7 374.4 L774.5 369.0 L785.0 367.0 L794.3 368.0 L804.8 376.0 L799.5 384.8 L789.0 385.3 L770.3 377.5Z"/><path d="M1547.0 449.0 L1566.5 447.8 L1568.5 453.0 L1567.9 470.0 L1565.2 471.3 L1548.3 471.3 L1546.3 459.6Z"/><path d="M1547.6 471.3 L1564.6 471.3 L1568.5 475.2 L1568.5 485.7 L1566.5 489.0 L1548.3 488.3Z"/><path d="M1730.9 482.8 L1734.2 474.4 L1764.8 475.7 L1768.1 482.2 L1767.4 493.3 L1762.2 494.6 L1746.6 492.0 L1744.6 485.5 L1732.8 484.2Z"/></g><g fill="#fff" stroke="#733628" stroke-width="1.2"><path d="M1008.0 334.0 L1013.0 334.0 L1011.0 341.0 L1020.0 345.0 L1037.0 341.0 L1021.0 349.0 L1020.0 352.0 L1007.0 350.0 L989.0 353.0 L985.0 357.0 L993.0 347.0 L1006.0 345.0 L1009.0 340.0Z"/><path d="M921.0 361.0 L941.0 365.0 L940.5 374.0 L930.0 367.0Z"/><path d="M1183.0 379.0 L1206.0 377.0 L1211.0 383.0 L1208.0 389.0 L1195.0 391.0 L1187.0 384.0Z"/><path d="M1270.0 397.0 L1284.0 392.0 L1280.0 400.0 L1272.0 400.0Z"/><path d="M1340.0 378.0 L1352.0 377.0 L1348.0 382.0Z"/><path d="M1304.0 432.0 L1312.0 432.0 L1307.0 442.0Z"/><path d="M1552.0 536.0 L1565.0 536.0 L1552.0 544.4Z"/><path d="M1728.0 532.0 L1744.0 531.0 L1742.0 537.0 L1730.0 538.0Z"/><path d="M1625.0 551.0 L1633.0 551.0 L1632.0 556.0 L1626.0 556.0Z"/><path d="M868.0 367.0 L876.0 368.0 L874.0 372.0Z"/><path d="M1080.0 354.0 L1088.0 355.0 L1084.0 359.0Z"/><path d="M1126.0 362.0 L1132.0 363.0 L1129.0 372.0Z"/></g></svg>
<!-- attribute dock -->
<div class="t" style="left:306px;top:777px;font-size:11.6px;color:#2a2a2a">Joined layer — Features Total: 252,Filtered: 252,Selected: 0</div>
<div class="a" style="left:299px;top:823px;width:1646px;height:195px;background:#fff;border-top:1px solid #c8c8c8;border-bottom:1px solid #c8c8c8"></div>
<div class="a" style="left:300px;top:824px;width:1630px;height:16px;background:linear-gradient(#f7f7f7,#ebebeb);border-bottom:1px solid #cfcfcf"></div>
<div class="hd" style="left:300px;width:26px;border-right:none"></div>
<div class="hd" style="left:326.0px;width:98.5px;">width</div>
<div class="hd" style="left:424.5px;width:99.0px;">height</div>
<div class="hd" style="left:523.5px;width:98.0px;">fid</div>
<div class="hd" style="left:621.5px;width:98.5px;padding-right:14px;">w-piedi</div>
<div class="hd" style="left:720.0px;width:98.5px;">w-modulo</div>
<div class="hd" style="left:818.5px;width:98.0px;">h-piedi</div>
<div class="hd" style="left:916.5px;width:98.5px;">h-modulo</div>
<div class="arr" style="left:708px;top:829px;border-left-width:4px;border-right-width:4px;border-top-width:5px"></div>
<div class="rn" style="top:840.5px">1</div>
<div class="a" style="left:326px;top:840.5px;width:689px;height:29.5px;background:#fff"></div>
<div class="cell" style="left:326.0px;top:840.5px;width:98.5px">1,137299</div>
<div class="cell" style="left:424.5px;top:840.5px;width:99.0px">1,324526</div>
<div class="cell" style="left:523.5px;top:840.5px;width:98.0px">46</div>
<div class="cell" style="left:621.5px;top:840.5px;width:98.5px">3</div>
<div class="cell" style="left:720.0px;top:840.5px;width:98.5px">0,21</div>
<div class="cell" style="left:818.5px;top:840.5px;width:98.0px">4</div>
<div class="cell" style="left:916.5px;top:840.5px;width:98.5px">0,21</div>
<div class="rn" style="top:870.0px">2</div>
<div class="a" style="left:326px;top:870.0px;width:689px;height:29.5px;background:#f3f3f3"></div>
<div class="cell" style="left:326.0px;top:870.0px;width:98.5px">1,079281</div>
<div class="cell" style="left:424.5px;top:870.0px;width:99.0px">1,09195</div>
<div class="cell" style="left:523.5px;top:870.0px;width:98.0px">51</div>
<div class="cell" style="left:621.5px;top:870.0px;width:98.5px">3</div>
<div class="cell" style="left:720.0px;top:870.0px;width:98.5px">0,16</div>
<div class="cell" style="left:818.5px;top:870.0px;width:98.0px">3</div>
<div class="cell" style="left:916.5px;top:870.0px;width:98.5px">0,16</div>
<div class="rn" style="top:899.5px">3</div>
<div class="a" style="left:326px;top:899.5px;width:689px;height:29.5px;background:#fff"></div>
<div class="cell" style="left:326.0px;top:899.5px;width:98.5px">0,994545</div>
<div class="cell" style="left:424.5px;top:899.5px;width:99.0px">1,306763</div>
<div class="cell" style="left:523.5px;top:899.5px;width:98.0px">59</div>
<div class="cell" style="left:621.5px;top:899.5px;width:98.5px">3</div>
<div class="cell" style="left:720.0px;top:899.5px;width:98.5px">0,07</div>
<div class="cell" style="left:818.5px;top:899.5px;width:98.0px">4</div>
<div class="cell" style="left:916.5px;top:899.5px;width:98.5px">0,07</div>
<div class="rn" style="top:929.0px">4</div>
<div class="a" style="left:326px;top:929.0px;width:689px;height:29.5px;background:#f3f3f3"></div>
<div class="cell" style="left:326.0px;top:929.0px;width:98.5px">0,945908</div>
<div class="cell" style="left:424.5px;top:929.0px;width:99.0px">1,612809</div>
<div class="cell" style="left:523.5px;top:929.0px;width:98.0px">60</div>
<div class="cell" style="left:621.5px;top:929.0px;width:98.5px">3</div>
<div class="cell" style="left:720.0px;top:929.0px;width:98.5px">0,02</div>
<div class="cell" style="left:818.5px;top:929.0px;width:98.0px">5</div>
<div class="cell" style="left:916.5px;top:929.0px;width:98.5px">0,02</div>
<div class="rn" style="top:958.5px">5</div>
<div class="a" style="left:326px;top:958.5px;width:689px;height:29.5px;background:#fff"></div>
<div class="cell" style="left:326.0px;top:958.5px;width:98.5px">0,953547</div>
<div class="cell" style="left:424.5px;top:958.5px;width:99.0px">1,458121</div>
<div class="cell" style="left:523.5px;top:958.5px;width:98.0px">68</div>
<div class="cell" style="left:621.5px;top:958.5px;width:98.5px">3</div>
<div class="cell" style="left:720.0px;top:958.5px;width:98.5px">0,03</div>
<div class="cell" style="left:818.5px;top:958.5px;width:98.0px">4</div>
<div class="cell" style="left:916.5px;top:958.5px;width:98.5px">0,03</div>
<div class="rn" style="top:988.0px">6</div>
<div class="a" style="left:326px;top:988.0px;width:689px;height:29.5px;background:#f3f3f3"></div>
<div class="cell" style="left:326.0px;top:988.0px;width:98.5px">0,994491</div>
<div class="cell" style="left:424.5px;top:988.0px;width:99.0px">1,148202</div>
<div class="cell" style="left:523.5px;top:988.0px;width:98.0px">75</div>
<div class="cell" style="left:621.5px;top:988.0px;width:98.5px">3</div>
<div class="cell" style="left:720.0px;top:988.0px;width:98.5px">0,07</div>
<div class="cell" style="left:818.5px;top:988.0px;width:98.0px">3</div>
<div class="cell" style="left:916.5px;top:988.0px;width:98.5px">0,07</div>
<!-- show all features -->
<div class="box" style="left:302px;top:1022px;width:118px;height:21px;border-color:#c6c6c6;background:linear-gradient(#fdfdfd,#f2f2f2)"></div>
<svg style="left:306px;top:1025px" width="14" height="15"><rect x="0.5" y="0.5" width="13" height="14" fill="#c9d3ec" stroke="#9aa9cf"/><rect x="0.5" y="0.5" width="13" height="3" fill="#7f95cc"/><path d="M1 7H13M1 10H13M5 4V15M9 4V15" stroke="#a8b6d8" stroke-width="0.8"/></svg>
<div class="t" style="left:323px;top:1026px;font-size:10.6px;color:#222;-webkit-text-stroke:0.2px #222">Show All Features</div>
<div class="arr" style="left:412px;top:1037px;border-left-width:2.5px;border-right-width:2.5px;border-top-width:3px"></div>
<!-- bottom right view buttons -->
<svg style="left:1900px;top:1025px" width="14" height="14"><rect x="0.5" y="0.5" width="13" height="13" fill="#e4e9f3" stroke="#b9c3d9"/><path d="M3 4H6M8 4H11M3 7H6M8 7H11M3 10H6M8 10H11" stroke="#8fa0c6" stroke-width="1"/></svg>
<div class="press" style="left:1918px;top:1021px;width:23px;height:22px;background:#dadde3;border-color:#b8bcc4"></div>
<svg style="left:1922px;top:1025px" width="15" height="15"><rect x="0.5" y="0.5" width="14" height="14" fill="#c9d3ec" stroke="#9aa9cf"/><rect x="0.5" y="0.5" width="14" height="3" fill="#7f95cc"/><path d="M1 7H14M1 10H14M5 4V15M10 4V15" stroke="#a8b6d8" stroke-width="0.8"/></svg>
<!-- locate -->
<div class="box" style="left:60px;top:1050px;width:209px;height:22px;border-color:#cbcbcb"></div>
<svg style="left:68px;top:1055px" width="13" height="13"><circle cx="5" cy="5" r="4" fill="none" stroke="#8a8a8a" stroke-width="1.5"/><path d="M8 8L12 12" stroke="#8a8a8a" stroke-width="1.8"/></svg>
<div class="t" style="left:88px;top:1054px;font-size:13px;line-height:15px;color:#9a9a9a">Type to locate (⌘K)</div>
<!-- coordinate -->
<div class="t" style="left:1064px;top:1056px;color:#333">Coordinate</div>
<div class="box" style="left:1124px;top:1051px;width:131px;height:21px;border-color:#cdcdcd"></div>
<div class="t" style="left:1132px;top:1055px;font-size:12px;line-height:14px;color:#333">5636,06 6369592,10</div>
<svg style="left:1259px;top:1053px" width="16" height="16"><path d="M2 3C4 1 8 1 9 4L11 9C12 13 8 15 5 13C2 11 1 6 2 3Z" fill="#777"/><circle cx="9" cy="11" r="3.2" fill="#eee" stroke="#555" stroke-width="1.2"/><path d="M12 4L15 1" stroke="#555" stroke-width="1"/></svg>
<div class="t" style="left:1288px;top:1055px;color:#333;font-weight:bold">Scale</div>
<div class="box" style="left:1320px;top:1050px;width:90px;height:22px;border-color:#cdcdcd"></div>
<div class="a" style="left:1391px;top:1051px;width:1px;height:20px;background:#d8d8d8"></div>
<div class="t" style="left:1324px;top:1056px;color:#333">1:96</div>
<div class="arr" style="left:1396px;top:1059px;border-left-width:4px;border-right-width:4px;border-top-width:5px;border-top-color:#444"></div>
<svg style="left:1422px;top:1054px" width="14" height="16"><path d="M3.5 7V5A3.5 3.5 0 0 1 10.5 5V7" fill="none" stroke="#6e6e6e" stroke-width="1.8"/><rect x="1" y="7" width="12" height="8" rx="1.5" fill="#6e6e6e"/></svg>
<div class="t" style="left:1444px;top:1056px;color:#333">Magnifier</div>
<div class="box" style="left:1497px;top:1051px;width:89px;height:21px;border-color:#cdcdcd"></div>
<div class="a" style="left:1572px;top:1052px;width:1px;height:19px;background:#dadada"></div>
<div class="t" style="left:1501px;top:1056px;color:#333">100%</div>
<svg style="left:1574px;top:1053px" width="11" height="17"><path d="M2 6L5.5 2.5L9 6Z M2 11L5.5 14.5L9 11Z" fill="#555"/></svg>
<div class="t" style="left:1594px;top:1056px;color:#333">Rotation</div>
<div class="box" style="left:1647px;top:1051px;width:90px;height:21px;border-color:#cdcdcd"></div>
<div class="a" style="left:1723px;top:1052px;width:1px;height:19px;background:#dadada"></div>
<div class="t" style="left:1652px;top:1056px;color:#333">0,0 °</div>
<svg style="left:1725px;top:1053px" width="11" height="17"><path d="M2 6L5.5 2.5L9 6Z M2 11L5.5 14.5L9 11Z" fill="#555"/></svg>
<div class="box" style="left:1745px;top:1056px;width:13px;height:13px;border-color:#bdbdbd;border-radius:2px"></div>
<svg style="left:1746px;top:1055px" width="12" height="13"><path d="M2.5 6.5L5 11L10 1.5" fill="none" stroke="#222" stroke-width="1.6"/></svg>
<div class="t" style="left:1763px;top:1056px;color:#333">Render</div>
<svg style="left:1815px;top:1054px" width="15" height="15"><circle cx="7.5" cy="7.5" r="6.5" fill="#8a8a8a"/><path d="M1 7.5H14M7.5 1V14M2.5 4H12.5M2.5 11H12.5" stroke="#cfcfcf" stroke-width="0.8"/><ellipse cx="7.5" cy="7.5" rx="3" ry="6.5" fill="none" stroke="#cfcfcf" stroke-width="0.8"/></svg>
<div class="t" style="left:1832px;top:1055px;color:#333;font-weight:bold">EPSG:32634</div>
<svg style="left:1921px;top:1053px" width="18" height="17"><path d="M9 1C4 1 1 4 1 7C1 10 4 13 8 13L12 16L11.5 12.5C15 11.5 17 9.5 17 7C17 4 14 1 9 1Z" fill="#6a6a6a"/><circle cx="5.5" cy="7" r="1.3" fill="#eee"/><circle cx="9" cy="7" r="1.3" fill="#eee"/><circle cx="12.5" cy="7" r="1.3" fill="#eee"/></svg>
<!-- attribute table scrollbar -->
<div class="a" style="left:1930px;top:824px;width:15px;height:193px;background:#fafafa;border-left:1px solid #dcdcdc"></div>
<div class="a" style="left:1931px;top:863px;width:14px;height:139px;background:#dadada"></div>
<svg style="left:1932px;top:826px" width="10" height="8"><path d="M1.5 6L5 2L8.5 6Z" fill="#333"/></svg>
<svg style="left:1932px;top:1005px" width="10" height="8"><path d="M1.5 2L5 6L8.5 2Z" fill="#333"/></svg>
<!-- dock buttons -->
<svg style="left:266px;top:131px" width="26" height="11"><rect x="0.7" y="0.7" width="10" height="10" rx="2" fill="none" stroke="#7a7a7a" stroke-width="1.2"/><rect x="4" y="2.5" width="4.5" height="4.5" rx="0.8" fill="none" stroke="#6a6a6a" stroke-width="1"/><rect x="2.5" y="4" width="4.5" height="4.5" rx="0.8" fill="#ececec" stroke="#6a6a6a" stroke-width="1"/><rect x="14.7" y="0.7" width="10" height="10" rx="2" fill="none" stroke="#7a7a7a" stroke-width="1.2"/><path d="M17 3L22.5 8.5M22.5 3L17 8.5" stroke="#444" stroke-width="1.5"/></svg>
<svg style="left:1918px;top:778px" width="26" height="11"><rect x="0.7" y="0.7" width="10" height="10" rx="2" fill="none" stroke="#7a7a7a" stroke-width="1.2"/><rect x="4" y="2.5" width="4.5" height="4.5" rx="0.8" fill="none" stroke="#6a6a6a" stroke-width="1"/><rect x="2.5" y="4" width="4.5" height="4.5" rx="0.8" fill="#ececec" stroke="#6a6a6a" stroke-width="1"/><rect x="14.7" y="0.7" width="10" height="10" rx="2" fill="none" stroke="#7a7a7a" stroke-width="1.2"/><path d="M17 3L22.5 8.5M22.5 3L17 8.5" stroke="#444" stroke-width="1.5"/></svg>
<!-- layer tree rows -->
<div class="a" style="left:79px;top:180px;width:13px;height:13px;background:#fff;border:1px solid #9db4e6;border-radius:2px"></div>
<svg style="left:79px;top:179px" width="13" height="14"><path d="M3 7L5.5 11.5L10.5 2" fill="none" stroke="#111" stroke-width="1.8"/></svg>
<div class="a" style="left:99px;top:179px;width:15px;height:15px;background:#c06a67;border:1px solid #a45552"></div>
<div class="t" style="left:120px;top:179px;font-size:13px;line-height:15px;color:#fff;font-weight:bold;text-decoration:underline">Joined layer</div>
<div class="box" style="left:79px;top:197px;width:13px;height:13px;border-color:#c6c6c6"></div>
<div class="a" style="left:104px;top:201px;width:5px;height:5px;border-radius:50%;background:#4a4a3a"></div>
<div class="t" style="left:121px;top:196px;font-size:13px;line-height:15px;color:#8a8a8a;font-weight:bold;font-style:italic">Centroids</div>
<div class="box" style="left:79px;top:215px;width:13px;height:13px;border-color:#c6c6c6"></div>
<div class="a" style="left:99px;top:214px;width:15px;height:15px;background:#6e7779;border:1px solid #5f6668"></div>
<div class="t" style="left:121px;top:214px;font-size:13px;line-height:15px;color:#8a8a8a;font-weight:bold;font-style:italic">Bounding boxes</div>
<div class="box" style="left:79px;top:232px;width:13px;height:13px;border-color:#c6c6c6"></div>
<div class="a" style="left:99px;top:231px;width:15px;height:15px;background:#8cb45e;border:1px solid #76a04c"></div>
<div class="t" style="left:121px;top:231px;font-size:13px;line-height:15px;color:#8a8a8a;font-weight:bold;font-style:italic">Polygons</div>
<div class="box" style="left:79px;top:250px;width:13px;height:13px;border-color:#c6c6c6"></div>
<div class="a" style="left:99px;top:256px;width:15px;height:2px;background:#7d7d7d"></div>
<div class="t" style="left:121px;top:249px;font-size:13px;line-height:15px;color:#8a8a8a;font-weight:bold;font-style:italic">rilievo</div>
<svg style="left:273px;top:198px" width="14" height="62"><rect x="0.8" y="1.5" width="12" height="7" rx="3" fill="none" stroke="#7a7a7a" stroke-width="1.2"/><rect x="0.8" y="19.5" width="12" height="7" rx="3" fill="none" stroke="#7a7a7a" stroke-width="1.2"/><rect x="0.8" y="37" width="12" height="7" rx="3" fill="none" stroke="#7a7a7a" stroke-width="1.2"/><path d="M1 52H13L8.5 57V61.5L5.5 60V57Z" fill="none" stroke="#6a6a6a" stroke-width="1.1"/></svg>

<div class="hdl" style="left:59.0px;top:71px;height:17px;width:6px"></div>
<div class="hdl" style="left:222.0px;top:71px;height:17px;width:6px"></div>
<div class="hdl" style="left:631.0px;top:71px;height:17px;width:6px"></div>
<div class="hdl" style="left:782.0px;top:71px;height:17px;width:6px"></div>
<div class="hdl" style="left:1029.0px;top:71px;height:17px;width:6px"></div>
<div class="hdl" style="left:1231.0px;top:71px;height:17px;width:6px"></div>
<div class="hdl" style="left:1320.0px;top:71px;height:17px;width:6px"></div>
<div class="a" style="left:1190px;top:71px;width:1px;height:17px;background:#dcdcdc"></div>
<div class="a" style="left:1220px;top:71px;width:1px;height:17px;background:#dcdcdc"></div>
<div class="press" style="left:641.7px;top:69.0px;width:22.3px;height:22.0px;background:#d6d6d6;border-color:#b4b4b4"></div>
<div class="press" style="left:665.0px;top:69.0px;width:10.5px;height:22.0px;background:#d6d6d6;border-color:#b4b4b4"></div>
<div class="press" style="left:962.0px;top:69.0px;width:23.0px;height:22.0px;background:#d6d6d6;border-color:#b4b4b4"></div>
<svg style="left:71.5px;top:71.5px" width="16" height="16" viewBox="0 0 16 16"><path d="M3.5 1.5H9.5L12.5 4.5V14.5H3.5Z" fill="#fff" stroke="#9a9a9a"/><path d="M9.5 1.5V4.5H12.5" fill="none" stroke="#9a9a9a"/></svg>
<svg style="left:96.0px;top:71.5px" width="16" height="16" viewBox="0 0 16 16"><path d="M1 4H6L7 5.5H14V13.5H1Z" fill="#e8c838"/><path d="M1 6.5H15V13.5H1Z" fill="#f5d94a"/></svg>
<svg style="left:121.0px;top:71.5px" width="16" height="16" viewBox="0 0 16 16"><rect x="1.5" y="1.5" width="13" height="13" rx="1.5" fill="#6a7fa8" stroke="#4f6590"/><rect x="3.5" y="2.5" width="9" height="4" fill="#c7d1e3"/><rect x="4" y="9.5" width="8" height="5" fill="#e8edf5"/><rect x="5" y="10.5" width="2" height="3" fill="#4f6590"/></svg>
<svg style="left:146.0px;top:71.5px" width="16" height="16" viewBox="0 0 16 16"><path d="M2.5 1.5H9.5L12.5 4.5V14.5H2.5Z" fill="#efe9a0" stroke="#c8b840"/><path d="M4 4H8M4 6.5H8" stroke="#c8b840"/><rect x="8.5" y="9.5" width="6" height="6" rx="1" fill="#e6d030" stroke="#b8a020"/></svg>
<svg style="left:170.0px;top:71.5px" width="16" height="16" viewBox="0 0 16 16"><path d="M2.5 1.5H10L13.5 5V14.5H2.5Z" fill="#f4f4f8" stroke="#a0a8c0"/><path d="M6 6L12 13" stroke="#6a7a9a" stroke-width="1.5"/><path d="M10 11L13 14" stroke="#9ab040" stroke-width="2"/></svg>
<svg style="left:195.0px;top:71.5px" width="16" height="16" viewBox="0 0 16 16"><circle cx="4.5" cy="4" r="3" fill="#a0603a"/><path d="M9 8L14 2" stroke="#4a80c0" stroke-width="2"/><rect x="2" y="9" width="5" height="6" fill="#6a9a70"/><rect x="9" y="11" width="3" height="4" fill="#8a9ab0"/></svg>
<svg style="left:235.0px;top:71.5px" width="16" height="16" viewBox="0 0 16 16"><path d="M5 14C3 12 2 9.5 2.5 8.5C3 7.5 4 8 4.5 9V3.5C4.5 2.5 6 2.5 6 3.5V7V2.5C6 1.5 7.6 1.5 7.6 2.5V7V3C7.6 2 9.2 2 9.2 3V7.5V4.5C9.2 3.5 10.8 3.5 10.8 4.5V10C10.8 12 10 13 9 14Z" fill="#fff" stroke="#555" stroke-width="1.1"/></svg>
<svg style="left:259.0px;top:71.5px" width="16" height="16" viewBox="0 0 16 16"><path d="M2 2L14 14" stroke="#e8e040" stroke-width="3"/><path d="M8 1.5L10.5 4L8 6.5L5.5 4Z M8 9.5L10.5 12L8 14.5L5.5 12Z M1.5 8L4 5.5L6.5 8L4 10.5Z M14.5 8L12 5.5L9.5 8L12 10.5Z" fill="#6c70a8"/><circle cx="8" cy="8" r="2" fill="#e8e040"/></svg>
<svg style="left:284.0px;top:71.5px" width="16" height="16" viewBox="0 0 16 16"><circle cx="9.5" cy="6.5" r="5" fill="#eef2fa" stroke="#7a8ab0" stroke-width="1.3"/><path d="M9.5 3.5L12 6.5L9.5 9.5L7 6.5Z" fill="#5a6fb0"/><path d="M6 10L1.5 14.5" stroke="#333" stroke-width="2"/><path d="M3.5 12.5L1 15" stroke="#c8c040" stroke-width="2"/></svg>
<svg style="left:308.0px;top:71.5px" width="16" height="16" viewBox="0 0 16 16"><circle cx="9.5" cy="6.5" r="5" fill="#eef2fa" stroke="#7a8ab0" stroke-width="1.3"/><rect x="7" y="5.5" width="5" height="2" fill="#333"/><path d="M6 10L1.5 14.5" stroke="#333" stroke-width="2"/><path d="M3.5 12.5L1 15" stroke="#c8c040" stroke-width="2"/></svg>
<svg style="left:333.0px;top:71.5px" width="16" height="16" viewBox="0 0 16 16"><rect x="3" y="1" width="5" height="5" fill="#6a7a90"/><rect x="10" y="1" width="5" height="5" fill="#6a7a90"/><rect x="10" y="8" width="5" height="7" fill="#6a7a90"/><rect x="5" y="7" width="4" height="4" fill="#9ab0d0"/><path d="M6 10L1.5 14.5" stroke="#333" stroke-width="2"/><path d="M3.5 12.5L1 15" stroke="#c8c040" stroke-width="2"/></svg>
<svg style="left:358.0px;top:71.5px" width="16" height="16" viewBox="0 0 16 16"><rect x="2" y="1" width="3" height="9" fill="#e8d840"/><circle cx="9.5" cy="6.5" r="5" fill="#fafafa" stroke="#777" stroke-width="1.3"/><path d="M6 10L1.5 14.5" stroke="#333" stroke-width="2"/><path d="M3.5 12.5L1 15" stroke="#c8c040" stroke-width="2"/></svg>
<svg style="left:383.0px;top:71.5px" width="16" height="16" viewBox="0 0 16 16"><path d="M1 2H5V9H1Z" fill="#cfcfcf"/><circle cx="9.5" cy="6.5" r="5" fill="#fafafa" stroke="#777" stroke-width="1.3"/><path d="M9 4A2 2 0 0 1 11 6" stroke="#999" fill="none"/><path d="M6 10L1.5 14.5" stroke="#333" stroke-width="2"/><path d="M3.5 12.5L1 15" stroke="#c8c040" stroke-width="2"/></svg>
<svg style="left:407.0px;top:71.5px" width="16" height="16" viewBox="0 0 16 16"><circle cx="9.5" cy="6.5" r="5" fill="#f6f6f6" stroke="#d0d0d0" stroke-width="1.3"/><path d="M6 10L1.5 14.5" stroke="#d4d4d4" stroke-width="2"/><path d="M8 6H11V9" stroke="#d8d8d8" fill="none"/></svg>
<svg style="left:432.0px;top:71.5px" width="16" height="16" viewBox="0 0 16 16"><circle cx="9" cy="6.5" r="5" fill="#fafafa" stroke="#777" stroke-width="1.3"/><path d="M6 10L1.5 14.5" stroke="#333" stroke-width="2"/><path d="M3.5 12.5L1 15" stroke="#c8c040" stroke-width="2"/><rect x="9" y="9" width="7" height="7" rx="1" fill="#5a7fd0"/><path d="M14 10L11 12.5L14 15" fill="none" stroke="#fff" stroke-width="1.3"/></svg>
<svg style="left:456.0px;top:71.5px" width="16" height="16" viewBox="0 0 16 16"><circle cx="9" cy="6.5" r="5" fill="#f6f6f6" stroke="#d4d4d4" stroke-width="1.3"/><path d="M6 10L1.5 14.5" stroke="#d4d4d4" stroke-width="2"/><rect x="9" y="9" width="7" height="7" rx="1" fill="#e8e8e8" stroke="#d4d4d4"/></svg>
<svg style="left:481.0px;top:71.5px" width="16" height="16" viewBox="0 0 16 16"><path d="M2 1.5H12V14H2Z" fill="#eeeeee" stroke="#bdbdbd"/><path d="M4 1.5V14" stroke="#d0d0d0"/><rect x="9" y="9.5" width="6.5" height="6.5" rx="1" fill="#e0d030" stroke="#b8a820"/><circle cx="12.25" cy="12.75" r="1.4" fill="#f8f0a0"/></svg>
<svg style="left:506.0px;top:71.5px" width="16" height="16" viewBox="0 0 16 16"><path d="M1 7C3 3 8 2 13 4V9H4Z" fill="#c8c8c8"/><path d="M1 7L4 9H13" fill="none" stroke="#aaa"/><rect x="9" y="9.5" width="6.5" height="6.5" rx="1" fill="#e0d030" stroke="#b8a820"/><circle cx="12.25" cy="12.75" r="1.4" fill="#f8f0a0"/></svg>
<svg style="left:532.0px;top:71.5px" width="16" height="16" viewBox="0 0 16 16"><path d="M4 1H9V14L6.5 11.5L4 14Z" fill="#6b8cc7" stroke="#4d6da8"/><rect x="8.5" y="9" width="7" height="7" rx="1" fill="#e0d030" stroke="#b8a820"/><circle cx="12" cy="12.5" r="1.5" fill="#f8f0a0"/></svg>
<svg style="left:555.0px;top:71.5px" width="16" height="16" viewBox="0 0 16 16"><path d="M2 2H13V15H2Z" fill="#eaeaea" stroke="#b8b8b8"/><path d="M4 2V15" stroke="#ccc"/><path d="M9 1H12V7L10.5 5.5L9 7Z" fill="#5a7ab8"/></svg>
<svg style="left:579.0px;top:71.5px" width="16" height="16" viewBox="0 0 16 16"><circle cx="8" cy="8" r="6.5" fill="#f6f6f6" stroke="#8a8a8a" stroke-width="1.3"/><path d="M8 3.5V8L10.5 10" fill="none" stroke="#7a7a7a" stroke-width="1.2"/></svg>
<svg style="left:604.0px;top:71.5px" width="16" height="16" viewBox="0 0 16 16"><path d="M13.5 6.5A5.8 5.8 0 0 0 3 5" fill="none" stroke="#3d6fd0" stroke-width="2.4"/><path d="M14.5 1.5V7H9Z" fill="#3d6fd0"/><path d="M2.5 9.5A5.8 5.8 0 0 0 13 11" fill="none" stroke="#3d6fd0" stroke-width="2.4"/><path d="M1.5 14.5V9H7Z" fill="#3d6fd0"/></svg>
<svg style="left:644.0px;top:71.5px" width="16" height="16" viewBox="0 0 16 16"><rect x="1.5" y="1.5" width="11" height="11" fill="#eee85a" stroke="#b0a030" stroke-dasharray="2 1"/><rect x="4" y="4" width="6" height="6" fill="#e8d820"/><path d="M8 7L15 11L12 12L14 15L13 15.5L11 12.5L9 14Z" fill="#fff" stroke="#666" stroke-width="0.7"/></svg>
<svg style="left:681.0px;top:71.5px" width="16" height="16" viewBox="0 0 16 16"><rect x="6" y="6.5" width="9" height="8.5" rx="1" fill="#e8d830" stroke="#c0b020"/><path d="M8 2.5C6 0.5 2.5 2 3.5 4C4.5 5 6 5 6 5C3 5 2 7.5 4 9C5.5 10 7.5 9 8 8.5" fill="none" stroke="#7a5a3a" stroke-width="1.4"/></svg>
<svg style="left:718.0px;top:71.5px" width="16" height="16" viewBox="0 0 16 16"><rect x="1.5" y="1.5" width="8" height="8" fill="#e8d830" stroke="#c0a820"/><rect x="4" y="4" width="8" height="8" fill="#e8d830" stroke="#c0a820"/><circle cx="12" cy="12" r="3.5" fill="#e88a8a"/><path d="M10.3 10.3L13.7 13.7M13.7 10.3L10.3 13.7" stroke="#c03030" stroke-width="1.2"/></svg>
<svg style="left:753.0px;top:71.5px" width="16" height="16" viewBox="0 0 16 16"><rect x="1" y="1" width="10" height="10" rx="1" fill="#e8d830" stroke="#c0a820"/><path d="M13 9A2.2 2.2 0 0 1 13 13.5L12 16L11 13.5A2.2 2.2 0 0 1 13 9Z" fill="#5a6a90"/></svg>
<svg style="left:794.0px;top:71.5px" width="16" height="16" viewBox="0 0 16 16"><circle cx="6.5" cy="6.5" r="6" fill="#5a82c8"/><circle cx="5" cy="4.5" r="2.5" fill="#8aaee0"/><path d="M6.5 5.5V10.5" stroke="#fff" stroke-width="1.8"/><circle cx="6.8" cy="3.2" r="1" fill="#fff"/><path d="M10 10L15 13.5L13 14L14.5 16" fill="#eee" stroke="#777" stroke-width="0.7"/></svg>
<svg style="left:819.0px;top:71.5px" width="16" height="16" viewBox="0 0 16 16"><rect x="1.5" y="2.5" width="13" height="12" fill="#f2f2f2" stroke="#7a7a7a"/><rect x="1.5" y="2.5" width="13" height="3" fill="#8a8a8a"/><path d="M1.5 8H14.5M1.5 10.5H14.5M1.5 13H14.5" stroke="#6aa070" stroke-width="0.9"/><path d="M4 1.5V4M8 1.5V4M12 1.5V4" stroke="#c04040" stroke-width="1"/></svg>
<svg style="left:843.0px;top:71.5px" width="16" height="16" viewBox="0 0 16 16"><circle cx="8" cy="8" r="5" fill="#5c8ad8"/><path d="M8 0.5V15.5M0.5 8H15.5M2.7 2.7L13.3 13.3M13.3 2.7L2.7 13.3" stroke="#5c8ad8" stroke-width="2.2"/><circle cx="8" cy="8" r="2" fill="#d8e4f8"/></svg>
<svg style="left:867.5px;top:71.5px" width="16" height="16" viewBox="0 0 16 16"><path d="M12.5 3.5V2H3L8 8L3 14H12.5V12.5" fill="none" stroke="#8a2aa8" stroke-width="2.4"/></svg>
<svg style="left:892.0px;top:71.5px" width="16" height="16" viewBox="0 0 16 16"><rect x="1.5" y="1.5" width="13" height="13" fill="#c8d4ee" stroke="#9fb0d8"/><rect x="1.5" y="1.5" width="13" height="3" fill="#8aa0d0"/><path d="M1.5 7.5H14.5M1.5 10.5H14.5M5.5 4.5V14.5M10 4.5V14.5" stroke="#a8b8e0" stroke-width="0.9"/></svg>
<svg style="left:929.0px;top:71.5px" width="16" height="16" viewBox="0 0 16 16"><rect x="1" y="4" width="14" height="3" fill="#6a6a6a"/><rect x="1" y="9" width="14" height="3" fill="#8a8a8a"/></svg>
<svg style="left:965.0px;top:71.5px" width="16" height="16" viewBox="0 0 16 16"><path d="M2 2H14V9H9L5 13V9H2Z" fill="#f0e890" stroke="#c8c060"/><path d="M3 12L6 9" stroke="#6a9a50" stroke-width="1.5"/></svg>
<svg style="left:989.0px;top:71.5px" width="16" height="16" viewBox="0 0 16 16"><circle cx="7" cy="7" r="4.5" fill="#eee" stroke="#d6d6d6" stroke-width="1.5"/><path d="M10 10L14 14" stroke="#d6d6d6" stroke-width="2"/></svg>
<svg style="left:1042.0px;top:71.5px" width="16" height="16" viewBox="0 0 16 16"><path d="M1 5L6 1L11 3L9 12L3 12Z" fill="#d8a030"/><rect x="4" y="2" width="10" height="10" rx="1" fill="#6a8cc8" stroke="#4a6aa8"/><rect x="10" y="10" width="6" height="6" rx="1" fill="#e8f0f8" stroke="#8aa0c0"/></svg>
<svg style="left:1066.0px;top:71.5px" width="16" height="16" viewBox="0 0 16 16"><path d="M1 6L8 2L15 6V13L8 16L1 13Z" fill="#d8c040"/><path d="M3 6L8 3L13 6L8 9Z" fill="#5a80c0"/><rect x="9.5" y="9" width="6" height="6.5" fill="#e0d030" stroke="#b8a820"/></svg>
<svg style="left:1092.0px;top:71.5px" width="16" height="16" viewBox="0 0 16 16"><path d="M1 2L5 13L9 2" fill="none" stroke="#777" stroke-width="1.3"/><path d="M9 3H15" stroke="#777"/><rect x="9" y="9" width="6.5" height="6.5" rx="1" fill="#e0d030" stroke="#b8a820"/><circle cx="12.25" cy="12.25" r="1.4" fill="#f8f0a0"/></svg>
<svg style="left:1116.0px;top:71.5px" width="16" height="16" viewBox="0 0 16 16"><path d="M1 14C4 8 8 3 15 1C13 7 8 11 3 13Z" fill="#6a8cc8"/><rect x="9" y="9" width="6.5" height="6.5" rx="1" fill="#e0d030" stroke="#b8a820"/></svg>
<svg style="left:1141.0px;top:71.5px" width="16" height="16" viewBox="0 0 16 16"><path d="M1 7C1 3 5 2 8 2C12 2 15 4 15 7V11H1Z" fill="#5a82c8"/><path d="M3 4V11M6 3V11M9 3V11M12 4V11" stroke="#3a62a8" stroke-width="0.7"/><rect x="9" y="9" width="6.5" height="6.5" rx="1" fill="#e0d030" stroke="#b8a820"/></svg>
<svg style="left:1165.0px;top:71.5px" width="16" height="16" viewBox="0 0 16 16"><rect x="1" y="1" width="13" height="13" fill="#5a78b0" stroke="#3a5890"/><path d="M3 3L7 7L11 3" stroke="#c8d8f0" fill="none"/><rect x="9" y="9" width="6.5" height="6.5" rx="1" fill="#e0d030" stroke="#b8a820"/></svg>
<svg style="left:1196.0px;top:71.5px" width="16" height="16" viewBox="0 0 16 16"><rect x="1" y="1" width="14" height="14" fill="#a8b8d8" stroke="#6a80b0"/><path d="M3 3L7 13L11 3" stroke="#fff" stroke-width="1.6" fill="none"/><rect x="10" y="10" width="5" height="5" fill="#e0d030"/></svg>
<svg style="left:1244.0px;top:71.5px" width="16" height="16" viewBox="0 0 16 16"><defs><radialGradient id="gl" cx="0.55" cy="0.45" r="0.6"><stop offset="0" stop-color="#c8d8f0"/><stop offset="0.6" stop-color="#8aa0c8"/><stop offset="1" stop-color="#5a6a88"/></radialGradient></defs><circle cx="7.5" cy="7.5" r="6.8" fill="url(#gl)"/><path d="M3.5 2C1.5 5 1.5 10 3.5 13M7.5 1V14M11.5 2C13.5 5 13.5 10 11.5 13" stroke="#4a5a90" stroke-width="0.9" fill="none"/><path d="M11 12.5L15 13.5L13 15.5Z" fill="#222"/></svg>
<svg style="left:1269.0px;top:71.5px" width="16" height="16" viewBox="0 0 16 16"><circle cx="7.5" cy="7.5" r="6.8" fill="url(#gl)"/><path d="M3.5 2C1.5 5 1.5 10 3.5 13M7.5 1V14M11.5 2C13.5 5 13.5 10 11.5 13" stroke="#4a5a90" stroke-width="0.9" fill="none"/><circle cx="12.5" cy="12.5" r="3" fill="#a8c890" stroke="#6a9a60"/></svg>
<svg style="left:1293.0px;top:71.5px" width="16" height="16" viewBox="0 0 16 16"><circle cx="8" cy="7" r="7" fill="url(#gl)"/><path d="M3 5L7 4L6 8L10 6L12 9" stroke="#3a4a70" fill="none"/><path d="M3 11H13V13H3Z" fill="#111"/><circle cx="4.5" cy="13" r="2.4" fill="#fff" stroke="#111" stroke-width="1.4"/><circle cx="11.5" cy="13" r="2.4" fill="#fff" stroke="#111" stroke-width="1.4"/></svg>
<svg style="left:1333.0px;top:71.5px" width="16" height="16" viewBox="0 0 16 16"><path d="M2 14L14 2" stroke="#7a9a70" stroke-width="1.5"/><path d="M4 6C7 2 12 2 14 3C14 6 12 11 7 12Z" fill="#5a78b0"/><path d="M9 13L14 8" stroke="#8ab080" stroke-width="1.5"/></svg>
<svg style="left:666.5px;top:78.0px" width="7" height="4"><path d="M0 0H7 L3.5 4Z" fill="#333"/></svg>
<svg style="left:703.5px;top:78.0px" width="7" height="4"><path d="M0 0H7 L3.5 4Z" fill="#333"/></svg>
<svg style="left:739.5px;top:78.0px" width="7" height="4"><path d="M0 0H7 L3.5 4Z" fill="#333"/></svg>
<svg style="left:915.2px;top:78.0px" width="7" height="4"><path d="M0 0H7 L3.5 4Z" fill="#333"/></svg>
<svg style="left:951.5px;top:78.0px" width="7" height="4"><path d="M0 0H7 L3.5 4Z" fill="#333"/></svg>
<svg style="left:1012.5px;top:78.0px" width="7" height="4"><path d="M0 0H7 L3.5 4Z" fill="#333"/></svg>
<div class="hdl" style="left:59.0px;top:101px;height:18px;width:6px"></div>
<div class="hdl" style="left:380.5px;top:101px;height:18px;width:6px"></div>
<div class="hdl" style="left:925.0px;top:101px;height:18px;width:6px"></div>
<div class="hdl" style="left:1346.4px;top:101px;height:18px;width:6px"></div>
<div class="press" style="left:934.5px;top:100.0px;width:23.2px;height:21.7px;background:#d6d6d6;border-color:#b8b8b8"></div>
<div class="press" style="left:984.0px;top:100.0px;width:22.5px;height:21.7px;background:#d6d6d6;border-color:#b8b8b8"></div>
<svg style="left:72.0px;top:102.0px" width="16" height="16" viewBox="0 0 16 16"><path d="M3 14L2.5 11L11 2.5L13.5 5L5 13.5Z" fill="#dedede" stroke="#cfcfcf"/></svg>
<svg style="left:95.0px;top:102.0px" width="16" height="16" viewBox="0 0 16 16"><path d="M2.5 14.5L2 11L11 2L14 5L5 14Z" fill="#e8dc50" stroke="#a8a030" stroke-width="0.8"/><path d="M2 11L5 14L2 14.5Z" fill="#5a8a40"/></svg>
<svg style="left:120.0px;top:102.0px" width="16" height="16" viewBox="0 0 16 16"><rect x="2" y="2" width="12" height="12" rx="1" fill="#e2e2e2" stroke="#d6d6d6"/><rect x="4" y="9" width="8" height="5" fill="#eeeeee"/></svg>
<svg style="left:146.0px;top:102.0px" width="16" height="16" viewBox="0 0 16 16"><path d="M1 4C1 2 4 1 7 2L12 3C14 4 14 6 12 8V11H7V8C4 8 1 7 1 4Z" fill="#dcdcdc"/><rect x="8" y="10" width="5" height="5" fill="#efefef" stroke="#d2d2d2"/></svg>
<svg style="left:170.0px;top:102.0px" width="16" height="16" viewBox="0 0 16 16"><path d="M3 3L13 13M3 13L8 8" stroke="#d8d8d8" stroke-width="1.5"/><rect x="1" y="1" width="4" height="4" fill="#e2e2e2"/><rect x="10" y="10" width="4" height="4" fill="#e2e2e2"/></svg>
<svg style="left:206.0px;top:102.0px" width="16" height="16" viewBox="0 0 16 16"><rect x="1" y="2" width="13" height="12" fill="#e0e0e0" stroke="#d4d4d4"/><path d="M5 12L12 3" stroke="#cacaca" stroke-width="1.2"/></svg>
<svg style="left:230.0px;top:102.0px" width="16" height="16" viewBox="0 0 16 16"><rect x="3" y="4" width="10" height="11" fill="#e0e0e0" stroke="#d2d2d2"/><rect x="2" y="2" width="12" height="2" fill="#d8d8d8"/></svg>
<svg style="left:256.0px;top:102.0px" width="16" height="16" viewBox="0 0 16 16"><path d="M2 5L14 12M2 11L8 7" stroke="#d2d2d2" stroke-width="1.5"/><circle cx="3" cy="4" r="2" fill="none" stroke="#d6d6d6"/></svg>
<svg style="left:279.0px;top:102.0px" width="16" height="16" viewBox="0 0 16 16"><rect x="3" y="2" width="9" height="12" rx="1" fill="#f0f0f0" stroke="#dcdcdc"/></svg>
<svg style="left:305.0px;top:102.0px" width="16" height="16" viewBox="0 0 16 16"><rect x="3" y="2" width="10" height="13" rx="1" fill="#efefef" stroke="#d8d8d8"/><rect x="6" y="1" width="4" height="3" fill="#e0e0e0"/></svg>
<svg style="left:330.0px;top:102.0px" width="16" height="16" viewBox="0 0 16 16"><path d="M4 8C5 4 11 4 12 8C12.5 11 10 12 9 12" fill="none" stroke="#d4d4d4" stroke-width="1.8"/><path d="M1 6L5 4L5 10Z" fill="#d4d4d4"/></svg>
<svg style="left:354.0px;top:102.0px" width="16" height="16" viewBox="0 0 16 16"><path d="M12 8C11 4 5 4 4 8C3.5 11 6 12 7 12" fill="none" stroke="#d4d4d4" stroke-width="1.8"/><path d="M15 6L11 4L11 10Z" fill="#d4d4d4"/></svg>
<svg style="left:394.0px;top:102.0px" width="16" height="16" viewBox="0 0 16 16"><path d="M2 14V2L14 14V2" fill="none" stroke="#cfcfcf" stroke-width="1.5"/><rect x="1" y="12" width="14" height="3" fill="#e2e2e2"/></svg>
<svg style="left:419.0px;top:102.0px" width="16" height="16" viewBox="0 0 16 16"><path d="M3 3L12 13" stroke="#d6d6d6" stroke-width="1.5"/><circle cx="3" cy="3" r="1" fill="#ddd"/></svg>
<svg style="left:456.0px;top:102.0px" width="16" height="16" viewBox="0 0 16 16"><path d="M1 5C1 2 5 1 8 2L13 3C15 5 14 7 12 8V12H6V9C3 9 1 8 1 5Z" fill="#dcdcdc"/><rect x="8" y="10" width="6" height="5" fill="#f0f0f0" stroke="#d4d4d4"/></svg>
<svg style="left:492.0px;top:102.0px" width="16" height="16" viewBox="0 0 16 16"><path d="M1 5C1 2 5 1 8 2L13 3C15 5 14 7 12 8V12H6V9C3 9 1 8 1 5Z" fill="#dcdcdc"/><rect x="8" y="10" width="6" height="5" fill="#f0f0f0" stroke="#d4d4d4"/></svg>
<svg style="left:517.0px;top:102.0px" width="16" height="16" viewBox="0 0 16 16"><path d="M1 5C1 2 5 1 8 2L13 3C15 5 14 7 12 8V12H6V9C3 9 1 8 1 5Z" fill="#dcdcdc"/><rect x="8" y="10" width="6" height="5" fill="#f0f0f0" stroke="#d4d4d4"/></svg>
<svg style="left:541.0px;top:102.0px" width="16" height="16" viewBox="0 0 16 16"><path d="M1 5C1 2 5 1 8 2L13 3C15 5 14 7 12 8V12H6V9C3 9 1 8 1 5Z" fill="#dcdcdc"/><rect x="8" y="10" width="6" height="5" fill="#f0f0f0" stroke="#d4d4d4"/></svg>
<svg style="left:566.0px;top:102.0px" width="16" height="16" viewBox="0 0 16 16"><path d="M1 5C1 2 5 1 8 2L13 3C15 5 14 7 12 8V12H6V9C3 9 1 8 1 5Z" fill="#dcdcdc"/><rect x="8" y="10" width="6" height="5" fill="#f0f0f0" stroke="#d4d4d4"/></svg>
<svg style="left:590.0px;top:102.0px" width="16" height="16" viewBox="0 0 16 16"><path d="M1 5C1 2 5 1 8 2L13 3C15 5 14 7 12 8V12H6V9C3 9 1 8 1 5Z" fill="#dcdcdc"/><rect x="8" y="10" width="6" height="5" fill="#f0f0f0" stroke="#d4d4d4"/></svg>
<svg style="left:615.0px;top:102.0px" width="16" height="16" viewBox="0 0 16 16"><path d="M1 5C1 2 5 1 8 2L13 3C15 5 14 7 12 8V12H6V9C3 9 1 8 1 5Z" fill="#dcdcdc"/><rect x="8" y="10" width="6" height="5" fill="#f0f0f0" stroke="#d4d4d4"/></svg>
<svg style="left:640.0px;top:102.0px" width="16" height="16" viewBox="0 0 16 16"><path d="M1 5C1 2 5 1 8 2L13 3C15 5 14 7 12 8V12H6V9C3 9 1 8 1 5Z" fill="#dcdcdc"/><rect x="8" y="10" width="6" height="5" fill="#f0f0f0" stroke="#d4d4d4"/></svg>
<svg style="left:664.0px;top:102.0px" width="16" height="16" viewBox="0 0 16 16"><path d="M1 5C1 2 5 1 8 2L13 3C15 5 14 7 12 8V12H6V9C3 9 1 8 1 5Z" fill="#dcdcdc"/><rect x="8" y="10" width="6" height="5" fill="#f0f0f0" stroke="#d4d4d4"/></svg>
<svg style="left:688.0px;top:102.0px" width="16" height="16" viewBox="0 0 16 16"><path d="M1 5C1 2 5 1 8 2L13 3C15 5 14 7 12 8V12H6V9C3 9 1 8 1 5Z" fill="#dcdcdc"/><rect x="8" y="10" width="6" height="5" fill="#f0f0f0" stroke="#d4d4d4"/></svg>
<svg style="left:713.0px;top:102.0px" width="16" height="16" viewBox="0 0 16 16"><path d="M3 3L12 13" stroke="#d6d6d6" stroke-width="1.5"/><circle cx="3" cy="3" r="1" fill="#ddd"/></svg>
<svg style="left:738.0px;top:102.0px" width="16" height="16" viewBox="0 0 16 16"><path d="M3 3L13 13M3 13L8 8" stroke="#d8d8d8" stroke-width="1.5"/><rect x="1" y="1" width="4" height="4" fill="#e2e2e2"/><rect x="10" y="10" width="4" height="4" fill="#e2e2e2"/></svg>
<svg style="left:763.0px;top:102.0px" width="16" height="16" viewBox="0 0 16 16"><path d="M3 3L13 13M3 13L8 8" stroke="#d8d8d8" stroke-width="1.5"/><rect x="1" y="1" width="4" height="4" fill="#e2e2e2"/><rect x="10" y="10" width="4" height="4" fill="#e2e2e2"/></svg>
<svg style="left:787.0px;top:102.0px" width="16" height="16" viewBox="0 0 16 16"><path d="M1 5C1 2 5 1 8 2L13 3C15 5 14 7 12 8V12H6V9C3 9 1 8 1 5Z" fill="#dcdcdc"/><rect x="8" y="10" width="6" height="5" fill="#f0f0f0" stroke="#d4d4d4"/></svg>
<svg style="left:812.0px;top:102.0px" width="16" height="16" viewBox="0 0 16 16"><path d="M1 5C1 2 5 1 8 2L13 3C15 5 14 7 12 8V12H6V9C3 9 1 8 1 5Z" fill="#dcdcdc"/><rect x="8" y="10" width="6" height="5" fill="#f0f0f0" stroke="#d4d4d4"/></svg>
<svg style="left:836.0px;top:102.0px" width="16" height="16" viewBox="0 0 16 16"><path d="M1 5C1 2 5 1 8 2L13 3C15 5 14 7 12 8V12H6V9C3 9 1 8 1 5Z" fill="#dcdcdc"/><rect x="8" y="10" width="6" height="5" fill="#f0f0f0" stroke="#d4d4d4"/></svg>
<svg style="left:861.0px;top:102.0px" width="16" height="16" viewBox="0 0 16 16"><path d="M2 4H14M2 8H14M2 12H14" stroke="#dcdcdc" stroke-width="1.2"/></svg>
<svg style="left:886.0px;top:102.0px" width="16" height="16" viewBox="0 0 16 16"><path d="M3 9A5 5 0 1 0 8 3" fill="none" stroke="#dedede" stroke-width="1.5"/><path d="M7 1L11 3L7 5Z" fill="#dedede"/></svg>
<svg style="left:938.0px;top:102.0px" width="16" height="16" viewBox="0 0 16 16"><path d="M3 5L1 8C0 11 3 15 7 15C10 15 13 13 14 10L11 8.5C10.5 10 9 11 7.5 11C5.5 11 4.5 9 5.5 7.5L7 6Z" fill="#d32a1c"/><path d="M3 5L7 6L8.5 3.5L4.5 2Z" fill="#f0f0f0" stroke="#999" stroke-width="0.5"/><path d="M14 10L11 8.5L12.5 6L15 7.5Z" fill="#f0f0f0" stroke="#999" stroke-width="0.5"/></svg>
<svg style="left:963.0px;top:102.0px" width="16" height="16" viewBox="0 0 16 16"><path d="M2 3L6 14L10 3" fill="none" stroke="#8ab070" stroke-width="1.5"/><path d="M9 3H14M9 6H14M9 9H13" stroke="#8a8a8a" stroke-width="1"/></svg>
<svg style="left:987.0px;top:102.0px" width="16" height="16" viewBox="0 0 16 16"><circle cx="4" cy="4" r="1" fill="#999"/><circle cx="11" cy="5" r="1" fill="#999"/><circle cx="7" cy="11" r="1" fill="#999"/></svg>
<svg style="left:1208.5px;top:102.0px" width="16" height="16" viewBox="0 0 16 16"><path d="M8 15V8L2 2M8 8L14 4" fill="none" stroke="#9aa89a" stroke-width="1.5"/></svg>
<svg style="left:1233.0px;top:102.0px" width="16" height="16" viewBox="0 0 16 16"><path d="M2 5C2 1 8 1 10 3C12 5 11 8 12 12L9 14C7 12 3 10 2 5Z" fill="#8aa878" stroke="#6a8a5a"/><path d="M12 11L14 13" stroke="#333"/></svg>
<svg style="left:1257.5px;top:102.0px" width="16" height="16" viewBox="0 0 16 16"><path d="M2 2L14 14M14 2L2 14" stroke="#b0b8b0" stroke-width="1.6"/></svg>
<svg style="left:1283.0px;top:102.0px" width="16" height="16" viewBox="0 0 16 16"><path d="M2 14L14 2" stroke="#c8d0c0" stroke-width="1.4"/><path d="M3 4L13 12M3 12L8 8L13 4" stroke="#e8c820" stroke-width="2.2"/></svg>
<svg style="left:1318.5px;top:102.0px" width="16" height="16" viewBox="0 0 16 16"><path d="M2 14L7 6L10 11L14 3" fill="none" stroke="#9aa890" stroke-width="1.5"/><path d="M10 3L14 4" stroke="#d8d040" stroke-width="2"/></svg>
<svg style="left:1360.0px;top:102.0px" width="16" height="16" viewBox="0 0 16 16"><path d="M8 1C4 1 4 3 4 4V6H9V7H3C1 7 1 10 2 11H4V9C4 8 5 8 6 8H10C11 8 12 7 12 6V3C12 2 11 1 8 1Z" fill="#3a70b0"/><path d="M8 15C12 15 12 13 12 12V10H7V9H13C15 9 15 6 14 5H12V7C12 8 11 8 10 8H6C5 8 4 9 4 10V13C4 14 5 15 8 15Z" fill="#f0c830"/></svg>
<svg style="left:192.5px;top:109.0px" width="7" height="4"><path d="M0 0H7 L3.5 4Z" fill="#333"/></svg>
<svg style="left:441.5px;top:109.0px" width="7" height="4"><path d="M0 0H7 L3.5 4Z" fill="#333"/></svg>
<svg style="left:478.5px;top:109.0px" width="7" height="4"><path d="M0 0H7 L3.5 4Z" fill="#333"/></svg>
<svg style="left:908.1px;top:109.0px" width="7" height="4"><path d="M0 0H7 L3.5 4Z" fill="#333"/></svg>
<svg style="left:1304.5px;top:109.0px" width="7" height="4"><path d="M0 0H7 L3.5 4Z" fill="#333"/></svg>
<svg style="left:85.5px;top:114.5px" width="5" height="3"><path d="M0 0H5 L2.5 3Z" fill="#333"/></svg>
<svg style="left:974.5px;top:114.5px" width="5" height="3"><path d="M0 0H5 L2.5 3Z" fill="#333"/></svg>
<svg style="left:999.5px;top:114.5px" width="5" height="3"><path d="M0 0H5 L2.5 3Z" fill="#333"/></svg>
<div class="box" style="left:1008.7px;top:100.7px;width:94.3px;height:21px;border-color:#c8c8c8"></div>
<div class="a" style="left:1090px;top:101.7px;width:1px;height:19px;background:#d8d8d8"></div>
<div class="t" style="left:1013px;top:104px;font-size:13px;line-height:15px;color:#222">12</div>
<svg style="left:1091px;top:102px" width="11" height="17"><path d="M2 6L5.5 2.5L9 6Z M2 11L5.5 14.5L9 11Z" fill="#555"/></svg>
<div class="box" style="left:1106px;top:100.7px;width:97px;height:21px;border-color:#c8c8c8;background:linear-gradient(#fdfdfd,#f3f3f3)"></div>
<div class="t" style="left:1110.5px;top:104px;font-size:13px;line-height:15px;color:#222">px</div>
<svg style="left:1188.0px;top:108.5px" width="8" height="5"><path d="M0 0H8 L4.0 5Z" fill="#444"/></svg>
<svg style="left:63.0px;top:152.5px" width="16" height="16" viewBox="0 0 16 16"><path d="M1 11L6 7L9 10L5 14Z" fill="#e07a50"/><path d="M6 7L13 1L15 3L9 10Z" fill="#e8c840"/></svg>
<svg style="left:87.0px;top:152.5px" width="16" height="16" viewBox="0 0 16 16"><path d="M3 3H8L9 4V14H3Z" fill="#f6f6f6" stroke="#8a8a8a"/><path d="M7 1H11L13 3V12" fill="none" stroke="#8a8a8a"/><rect x="9" y="10" width="5" height="5" fill="#eee" stroke="#888"/></svg>
<svg style="left:113.0px;top:152.5px" width="16" height="16" viewBox="0 0 16 16"><ellipse cx="7" cy="8" rx="6.5" ry="4.5" fill="#dfe4f2" stroke="#9aa6c8"/><circle cx="7" cy="8" r="2.8" fill="#3a4aa8"/><circle cx="7" cy="8" r="1" fill="#fff"/></svg>
<svg style="left:137.0px;top:152.5px" width="16" height="16" viewBox="0 0 16 16"><path d="M1 1H15L10 7V14L6 15V7Z" fill="#5a7ec0"/><path d="M1 1H15L14 3H2Z" fill="#b8d878"/></svg>
<svg style="left:162.0px;top:152.5px" width="16" height="16" viewBox="0 0 16 16"><path d="M7 2C5 0.5 2 1.5 3 3.5C4 4.5 5.5 4.5 5.5 4.5C2.5 4.5 1.5 7 3.5 8.5C5 9.5 7 8.5 7.5 8" fill="none" stroke="#777" stroke-width="1.4"/><path d="M8 8H15L12 11V15H11V11Z" fill="#d4d4d4" stroke="#999" stroke-width="0.7"/></svg>
<svg style="left:198.0px;top:152.5px" width="16" height="16" viewBox="0 0 16 16"><rect x="1" y="2" width="6" height="13" fill="#f0e080" stroke="#b8b060"/><path d="M9 1H13V9H15.5L11 15L6.5 9H9Z" fill="#4a78c0"/></svg>
<svg style="left:223.0px;top:152.5px" width="16" height="16" viewBox="0 0 16 16"><rect x="1" y="2" width="6" height="13" fill="#f0e080" stroke="#b8b060"/><path d="M9 15H13V7H15.5L11 1L6.5 7H9Z" fill="#4a78c0"/></svg>
<svg style="left:247.0px;top:152.5px" width="16" height="16" viewBox="0 0 16 16"><rect x="1.5" y="1.5" width="11" height="11" fill="none" stroke="#777"/><rect x="9" y="10" width="6" height="5" rx="1" fill="#e86040"/><path d="M10.5 12.5H13.5" stroke="#fff"/></svg>
<svg style="left:183.5px;top:159.0px" width="7" height="4"><path d="M0 0H7 L3.5 4Z" fill="#333"/></svg>
<svg style="left:125.5px;top:165.5px" width="5" height="3"><path d="M0 0H5 L2.5 3Z" fill="#333"/></svg>
<svg style="left:149.5px;top:165.5px" width="5" height="3"><path d="M0 0H5 L2.5 3Z" fill="#333"/></svg>
<div class="box" style="left:377px;top:796.4px;width:23.4px;height:22.4px;border-color:#c4c4c4;border-radius:3px"></div>
<div class="press" style="left:879.0px;top:796.8px;width:23.0px;height:22.2px;background:#d9d9d9;border-color:#bdbdbd"></div>
<svg style="left:306.0px;top:800.0px" width="16" height="16" viewBox="0 0 16 16"><path d="M2.5 14.5L2 11L11 2L14 5L5 14Z" fill="#e8dc50" stroke="#a8a030" stroke-width="0.8"/><path d="M2 11L5 14L2 14.5Z" fill="#5a8a40"/></svg>
<svg style="left:331.0px;top:800.0px" width="16" height="16" viewBox="0 0 16 16"><rect x="1" y="2" width="13" height="12" fill="#e0e0e0" stroke="#d4d4d4"/><path d="M5 12L12 3" stroke="#cacaca" stroke-width="1.2"/></svg>
<svg style="left:356.0px;top:800.0px" width="16" height="16" viewBox="0 0 16 16"><rect x="2" y="2" width="12" height="12" rx="1" fill="#e2e2e2" stroke="#d6d6d6"/><rect x="4" y="9" width="8" height="5" fill="#eeeeee"/></svg>
<svg style="left:381.0px;top:800.0px" width="16" height="16" viewBox="0 0 16 16"><path d="M13.5 6.5A5.8 5.8 0 0 0 3 5" fill="none" stroke="#3d6fd0" stroke-width="2.4"/><path d="M14.5 1.5V7H9Z" fill="#3d6fd0"/><path d="M2.5 9.5A5.8 5.8 0 0 0 13 11" fill="none" stroke="#3d6fd0" stroke-width="2.4"/><path d="M1.5 14.5V9H7Z" fill="#3d6fd0"/></svg>
<svg style="left:412.0px;top:800.0px" width="16" height="16" viewBox="0 0 16 16"><rect x="2" y="2" width="11" height="10" fill="#e2e2e2"/><rect x="5" y="6" width="9" height="9" fill="#eeeeee" stroke="#d8d8d8"/></svg>
<svg style="left:436.0px;top:800.0px" width="16" height="16" viewBox="0 0 16 16"><rect x="3" y="4" width="10" height="11" fill="#e0e0e0" stroke="#d2d2d2"/><rect x="2" y="2" width="12" height="2" fill="#d8d8d8"/></svg>
<svg style="left:461.0px;top:800.0px" width="16" height="16" viewBox="0 0 16 16"><path d="M2 5L14 12M2 11L8 7" stroke="#d2d2d2" stroke-width="1.5"/><circle cx="3" cy="4" r="2" fill="none" stroke="#d6d6d6"/></svg>
<svg style="left:485.0px;top:800.0px" width="16" height="16" viewBox="0 0 16 16"><rect x="3" y="2" width="9" height="12" rx="1" fill="#f0f0f0" stroke="#dcdcdc"/></svg>
<svg style="left:510.0px;top:800.0px" width="16" height="16" viewBox="0 0 16 16"><rect x="3" y="2" width="10" height="13" rx="1" fill="#efefef" stroke="#d8d8d8"/><rect x="6" y="1" width="4" height="3" fill="#e0e0e0"/></svg>
<svg style="left:542.0px;top:800.0px" width="16" height="16" viewBox="0 0 16 16"><rect x="6" y="6.5" width="9" height="8.5" rx="1" fill="#e8d830" stroke="#c0b020"/><path d="M8 2.5C6 0.5 2.5 2 3.5 4C4.5 5 6 5 6 5C3 5 2 7.5 4 9C5.5 10 7.5 9 8 8.5" fill="none" stroke="#7a5a3a" stroke-width="1.4"/></svg>
<svg style="left:567.0px;top:800.0px" width="16" height="16" viewBox="0 0 16 16"><rect x="1" y="2" width="14" height="12" fill="#e8d830"/><path d="M1 6H15M1 10H15" stroke="#c0b020" stroke-width="1.2"/></svg>
<svg style="left:591.0px;top:800.0px" width="16" height="16" viewBox="0 0 16 16"><rect x="1.5" y="1.5" width="13" height="13" fill="#f6f6f6" stroke="#9a9a9a"/><path d="M1.5 1.5L14.5 14.5H1.5Z" fill="#e8d830"/></svg>
<svg style="left:616.0px;top:800.0px" width="16" height="16" viewBox="0 0 16 16"><rect x="1" y="1" width="10" height="10" fill="#e8d830" stroke="#c8b020"/><circle cx="12" cy="12" r="3.5" fill="#e87a8a"/><path d="M10.5 10.5L13.5 13.5M13.5 10.5L10.5 13.5" stroke="#c02040"/></svg>
<svg style="left:641.0px;top:800.0px" width="16" height="16" viewBox="0 0 16 16"><path d="M1 1H15L10 7V14L6 15V7Z" fill="#4a70b8"/><path d="M1 1H15L14 3H2Z" fill="#b8d878"/></svg>
<svg style="left:665.0px;top:800.0px" width="16" height="16" viewBox="0 0 16 16"><rect x="1" y="1" width="14" height="14" fill="#7ab0e0"/><rect x="1" y="10" width="14" height="5" fill="#7ab858"/><path d="M8 3V12M5 6L8 3L11 6" stroke="#fff" stroke-width="1.6" fill="none"/></svg>
<svg style="left:689.0px;top:800.0px" width="16" height="16" viewBox="0 0 16 16"><path d="M2 2L14 14" stroke="#e8e040" stroke-width="3"/><path d="M8 1.5L10.5 4L8 6.5L5.5 4Z M8 9.5L10.5 12L8 14.5L5.5 12Z M1.5 8L4 5.5L6.5 8L4 10.5Z M14.5 8L12 5.5L9.5 8L12 10.5Z" fill="#6c70a8"/><circle cx="8" cy="8" r="2" fill="#e8e040"/></svg>
<svg style="left:715.0px;top:800.0px" width="16" height="16" viewBox="0 0 16 16"><rect x="1.5" y="1" width="3" height="10" fill="#e8d840"/><circle cx="9.5" cy="6.5" r="5.5" fill="#fafafa" stroke="#8a8a6a" stroke-width="1.3"/><path d="M6 10L1.5 14.5" stroke="#333" stroke-width="2"/></svg>
<svg style="left:746.0px;top:800.0px" width="16" height="16" viewBox="0 0 16 16"><rect x="2" y="1" width="5" height="14" fill="#e0e0e0"/><rect x="8" y="8" width="6" height="6" fill="#ececec" stroke="#d8d8d8"/></svg>
<svg style="left:771.0px;top:800.0px" width="16" height="16" viewBox="0 0 16 16"><rect x="2" y="1" width="5" height="14" fill="#e0e0e0"/><rect x="8" y="8" width="6" height="6" fill="#ececec" stroke="#d8d8d8"/></svg>
<svg style="left:795.0px;top:800.0px" width="16" height="16" viewBox="0 0 16 16"><rect x="1" y="1" width="14" height="14" fill="#c8d4ee"/><path d="M4 14L13 2" stroke="#d87030" stroke-width="2.5"/></svg>
<svg style="left:820.0px;top:800.0px" width="16" height="16" viewBox="0 0 16 16"><rect x="1.5" y="2.5" width="13" height="12" fill="#f2f2f2" stroke="#7a7a7a"/><rect x="1.5" y="2.5" width="13" height="3" fill="#8a8a8a"/><path d="M1.5 8H14.5M1.5 10.5H14.5M1.5 13H14.5" stroke="#6a6a6a" stroke-width="0.9"/><path d="M4 1.5V4M8 1.5V4M12 1.5V4" stroke="#c04040"/></svg>
<svg style="left:851.0px;top:800.0px" width="16" height="16" viewBox="0 0 16 16"><rect x="2" y="2" width="12" height="12" fill="#f4f4f4" stroke="#c8c8c8"/><rect x="4" y="4" width="8" height="2" fill="#e06060"/><rect x="4" y="7" width="8" height="2" fill="#60a060"/><rect x="4" y="10" width="8" height="2" fill="#c04040"/></svg>
<svg style="left:882.0px;top:800.0px" width="16" height="16" viewBox="0 0 16 16"><rect x="1.5" y="2.5" width="13" height="11" fill="#e8ecf4" stroke="#8a98b8"/><rect x="1.5" y="2.5" width="13" height="2.5" fill="#7a88a8"/><rect x="5" y="7" width="6" height="5" fill="#c8d0e8"/></svg>
<svg style="left:907.0px;top:800.0px" width="16" height="16" viewBox="0 0 16 16"><circle cx="7" cy="7" r="5.5" fill="#6a8ac8"/><circle cx="7" cy="7" r="3" fill="#dde6f6"/><path d="M11 11L15 15" stroke="#777" stroke-width="2"/></svg>
<div class="a" style="left:534.0px;top:800px;width:1px;height:16px;background:#d8d8d8"></div>
<div class="a" style="left:738.6px;top:800px;width:1px;height:16px;background:#d8d8d8"></div>
<div class="a" style="left:844.0px;top:800px;width:1px;height:16px;background:#d8d8d8"></div>
<div class="a" style="left:873.8px;top:800px;width:1px;height:16px;background:#d8d8d8"></div>
<svg style="left:424.5px;top:812.5px" width="5" height="3"><path d="M0 0H5 L2.5 3Z" fill="#333"/></svg>
</div>
</body></html>
